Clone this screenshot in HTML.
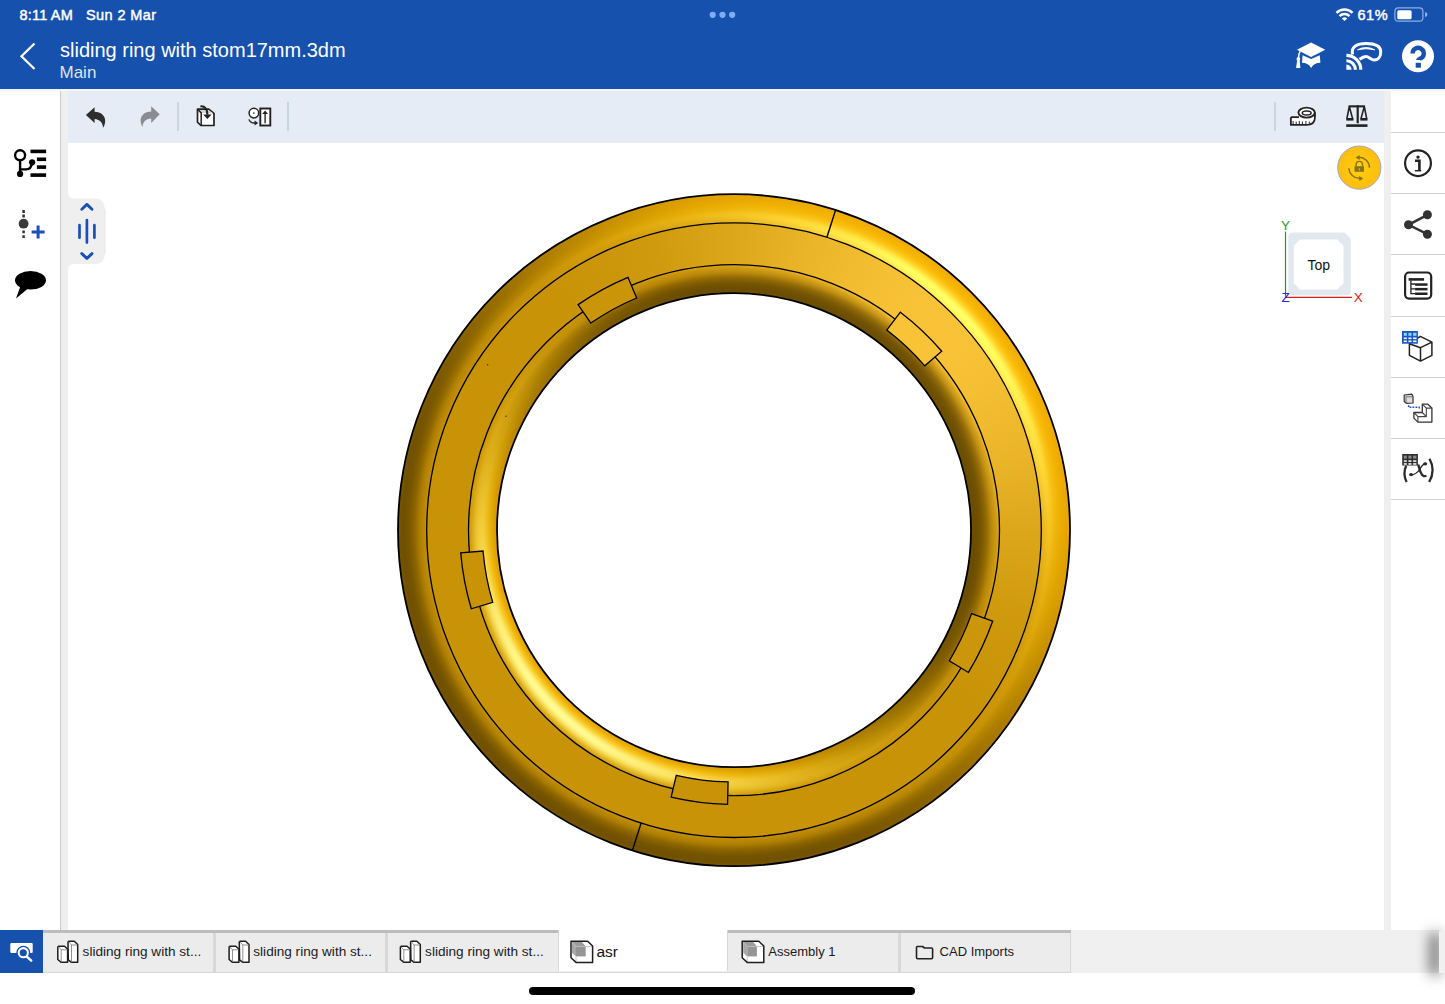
<!DOCTYPE html>
<html><head><meta charset="utf-8">
<style>
html,body{margin:0;padding:0;width:1445px;height:1004px;overflow:hidden;background:#fff;font-family:"Liberation Sans",sans-serif;}
.a{position:absolute}
.d{position:absolute;border-radius:50%}
svg{position:absolute;overflow:visible}
.tab{position:absolute;top:933px;height:38.5px;background:#ececec;font-size:13.6px;color:#1a1a1a}
.tab span{position:absolute;top:11px;white-space:nowrap}
.sep{position:absolute;left:1391px;width:54px;height:1.5px;background:#d2d2d2}
</style></head><body>
<!-- header -->
<div class="a" style="left:0;top:0;width:1445px;height:89px;background:#1651ae"></div>
<div class="a" style="left:0;top:89px;width:1445px;height:2px;background:#f4f6fa"></div>
<div class="a" style="left:19.5px;top:6.5px;color:#fff;font-size:14.5px;-webkit-text-stroke:0.45px #fff;letter-spacing:0.2px">8:11 AM</div>
<div class="a" style="left:86px;top:6.5px;color:#fff;font-size:14.5px;-webkit-text-stroke:0.45px #fff;letter-spacing:0.4px">Sun 2 Mar</div>
<div class="a" style="left:60px;top:39px;color:#fff;font-size:20px;white-space:nowrap">sliding ring with stom17mm.3dm</div>
<div class="a" style="left:59.5px;top:62.5px;color:#dde6f5;font-size:17px">Main</div>
<div class="a" style="left:1357.5px;top:6.5px;color:#fff;font-size:14.5px;-webkit-text-stroke:0.45px #fff;letter-spacing:0.5px">61%</div>
<svg width="1445" height="89" style="left:0;top:0">
  <circle cx="712.7" cy="14.8" r="3.1" fill="#80acf6"/><circle cx="722.5" cy="14.8" r="3.1" fill="#80acf6"/><circle cx="732.2" cy="14.8" r="3.1" fill="#80acf6"/>
  <polyline points="34.5,43.5 21.5,56.2 34.5,69" fill="none" stroke="#fff" stroke-width="2.3"/>
  <!-- wifi -->
  <path d="M1336.5 12.8 A11.5 11.5 0 0 1 1352.5 12.8" fill="none" stroke="#fff" stroke-width="2.5"/>
  <path d="M1339.5 16.2 A7 7 0 0 1 1349.5 16.2" fill="none" stroke="#fff" stroke-width="2.5"/>
  <path d="M1341.8 18.6 L1344.5 21 L1347.2 18.6 A3.8 3.8 0 0 0 1341.8 18.6Z" fill="#fff"/>
  <!-- battery -->
  <rect x="1394.9" y="7.9" width="28" height="13.3" rx="3.5" fill="none" stroke="#8fb0e8" stroke-width="1.2"/>
  <rect x="1397.3" y="10.2" width="14.3" height="9" rx="1.5" fill="#fff"/>
  <path d="M1425 12.2 A2.4 2.4 0 0 1 1425 17 Z" fill="#8fb0e8"/>
  <!-- grad cap -->
  <path d="M1296.9 49.8 L1311.1 42.5 L1325.3 49.8 L1311.1 57 Z" fill="#fff"/>
  <path d="M1302.6 55.2 L1311.1 58.9 L1319.8 55.2 L1320.4 62.8 Q1314.2 62.8 1311.1 67.9 Q1308 62.8 1302 62.8 Z" fill="#fff"/>
  <path d="M1300.2 51.2 Q1298.7 53.5 1298.6 57.5" fill="none" stroke="#fff" stroke-width="1.5"/>
  <circle cx="1298.4" cy="59" r="1.9" fill="#fff"/>
  <path d="M1297.2 60.3 L1299.7 60.3 L1300.4 68.1 L1296.1 68.1 Z" fill="#fff"/>
  <!-- cast/vr -->
  <path d="M1352.6 54.5 C1350.6 46.5 1357.5 43.6 1366 43.6 C1375 43.6 1380.7 46.5 1380.7 52 C1380.7 58 1377.2 60 1374.3 60 C1371.2 60 1368.8 56.4 1366 56.4 C1363.5 56.4 1361.5 57.8 1359.6 59.3" fill="none" stroke="#fff" stroke-width="3"/>
  <path d="M1357.5 49.8 Q1366 45.2 1374.8 49.8 Q1366 47.6 1357.5 49.8 Z" fill="#fff" stroke="#fff" stroke-width="0.9"/>
  <path d="M1346.4 55.4 A14.4 14.4 0 0 1 1360.8 69.8" fill="none" stroke="#fff" stroke-width="3.1"/>
  <path d="M1346.4 60.8 A9 9 0 0 1 1355.4 69.8" fill="none" stroke="#fff" stroke-width="3.1"/>
  <path d="M1346.4 64.6 A5.2 5.2 0 0 1 1351.6 69.8 L1346.4 69.8 Z" fill="#fff"/>
  <!-- help -->
  <circle cx="1418" cy="56.2" r="16" fill="#fff"/>
  <path d="M1412.6 53.5 A5.6 5.6 0 1 1 1421.4 58 Q1418.3 59.3 1418.3 60" fill="none" stroke="#1651ae" stroke-width="4.4"/>
  <rect x="1415.7" y="62.8" width="5.2" height="4.9" fill="#1651ae"/>
</svg>
<!-- left panel -->
<div class="a" style="left:60px;top:91px;width:8.3px;height:839.5px;background:#efefef;border-left:1.2px solid #c9c9c9;box-sizing:border-box"></div>
<svg width="60" height="320" style="left:0;top:0">
  <circle cx="20.1" cy="155.3" r="5" fill="none" stroke="#000" stroke-width="2.4"/>
  <path d="M20.1 160.5 V173.8" stroke="#000" stroke-width="2.4"/>
  <path d="M20.1 169.4 H26 Q31.5 169.4 32 162.5" fill="none" stroke="#000" stroke-width="2.4"/>
  <circle cx="20.1" cy="173.9" r="3.1" fill="#000"/>
  <circle cx="32.1" cy="162.3" r="3.1" fill="#000"/>
  <rect x="30.5" y="149.6" width="15.6" height="3.6" fill="#000"/>
  <rect x="36.9" y="157.5" width="9.2" height="3.6" fill="#000"/>
  <rect x="36.9" y="165.3" width="9.2" height="3.6" fill="#000"/>
  <rect x="30.5" y="173.3" width="15.6" height="3.6" fill="#000"/>
  <path d="M23.6 210.1 V213 M23.6 214.6 V217.5 M23.6 230.4 V233.3 M23.6 235.2 V238.1" stroke="#333" stroke-width="2.5"/>
  <circle cx="23.6" cy="223.7" r="4.9" fill="#3a3a3a"/>
  <path d="M31.6 232.1 H44.6 M38.1 225.6 V238.6" stroke="#1a50b8" stroke-width="3"/>
  <ellipse cx="30.5" cy="280.3" rx="15.5" ry="9.3" fill="#000"/>
  <path d="M20.5 286 L16 298.6 L28 288.5 Z" fill="#000"/>
</svg>
<!-- collapse tab -->
<svg width="60" height="100" style="left:0;top:0">
</svg>
<svg width="120" height="300" style="left:0;top:0">
  <path d="M68 191.5 Q68 198.5 74.5 198.5 L94.5 198.5 Q104.9 198.5 104.9 209 L104.9 253.5 Q104.9 264 94.5 264 L74.5 264 Q68 264 68 270.5 Z" fill="#efefef"/>
  <path d="M104.9 209 L104.9 253.5" stroke="#e2e2e2" stroke-width="0.8"/>
  <polyline points="81.8,209.2 86.9,204.4 92,209.2" fill="none" stroke="#1a4fb8" stroke-width="2.9" stroke-linecap="round" stroke-linejoin="round"/>
  <path d="M79.5 225.2 V237.7 M86.9 220.2 V242.6 M94.4 225.2 V237.7" stroke="#1a4fb8" stroke-width="2.7" stroke-linecap="round"/>
  <polyline points="81.8,253.6 86.9,258.4 92,253.6" fill="none" stroke="#1a4fb8" stroke-width="2.9" stroke-linecap="round" stroke-linejoin="round"/>
</svg>
<!-- toolbar -->
<div class="a" style="left:68.3px;top:91px;width:1315.7px;height:51.5px;background:#e6ecf6"></div>
<div class="a" style="left:176.5px;top:102px;width:2px;height:28.5px;background:#c9d5df"></div>
<div class="a" style="left:286.7px;top:102px;width:2px;height:28.5px;background:#c9d5df"></div>
<div class="a" style="left:1273.8px;top:102px;width:2px;height:29px;background:#c9d5df"></div>
<svg width="1445" height="145" style="left:0;top:0">
  <!-- undo -->
  <path d="M85.9 114.9 L94.6 107.2 L94.6 111.8 C101 111.8 105.5 116 105.2 121.5 C105 124 104.2 126 103 127.8 C103 123 100 119.3 94.6 118.9 L94.6 123 Z" fill="#2e2e2e"/>
  <!-- redo -->
  <path d="M159.7 114.3 L151.2 106.3 L151.2 111.4 C144.8 111.4 140.3 115.6 140.6 121.1 C140.8 123.6 141.6 125.4 142.5 127 C142.7 122.4 145.7 118.9 151.2 118.6 L151.2 123 Z" fill="#8a8c90"/>
  <!-- icon3 -->
  <path d="M197.5 109.2 L208.7 109.2 L214 113.4 L214 125.5 L200.9 125.5 L197.5 122.1 Z" fill="#fff" stroke="#222" stroke-width="1.7" stroke-linejoin="round"/>
  <path d="M198.3 110 L208.4 110 L213.2 113.3 L201.2 112.9 Z" fill="#d4d4d4"/>
  <path d="M197.5 109.2 L201.2 112.9 V125.5" fill="none" stroke="#222" stroke-width="1.5"/>
  <path d="M200.4 106.4 C205 105.8 207.6 109.5 207.4 114.8" fill="none" stroke="#222" stroke-width="2"/>
  <path d="M203.2 114.6 L211.6 114.6 L207.4 118.9 Z" fill="#222"/>
  <!-- icon4 -->
  <circle cx="253.9" cy="113.1" r="4.8" fill="#fff" stroke="#222" stroke-width="1.5"/>
  <circle cx="253.9" cy="113.1" r="0.8" fill="#222"/>
  <rect x="260.3" y="108.5" width="10" height="17" fill="#fff" stroke="#222" stroke-width="1.9"/>
  <path d="M265.1 123.3 V112.5" stroke="#222" stroke-width="1.4"/>
  <path d="M262.2 114 L265.1 110.4 L268 114 Z" fill="#222"/>
  <path d="M249 119.4 C249.6 122.2 252 123.2 255.4 123" fill="none" stroke="#222" stroke-width="1.3"/>
  <path d="M254.6 120.4 L258.2 123 L254.6 125.4 Z" fill="#222"/>
  <!-- tape -->
  <path d="M1290.9 117.2 H1299 M1290.9 117.2 V124.9 H1306.5 Q1314.9 124.9 1314.9 117 V112.6" fill="#fff" stroke="#222" stroke-width="1.9" stroke-linejoin="round"/>
  <path d="M1291.9 118.2 H1299 Q1301 118.5 1306.6 117.6 Q1312 117 1313.9 113 V117 Q1313.9 123.9 1306.5 123.9 H1291.9 Z" fill="#fff"/>
  <ellipse cx="1306.6" cy="112.6" rx="8.2" ry="5" fill="#fff" stroke="#222" stroke-width="1.9"/>
  <ellipse cx="1306.7" cy="112.9" rx="4.4" ry="2" fill="none" stroke="#222" stroke-width="1.5"/>
  <path d="M1293.1 121 V124 M1296.2 121.6 V124 M1299.3 121 V124 M1302.4 121.6 V124 M1305.9 121 V124 M1309.3 121.6 V124" stroke="#222" stroke-width="1"/>
  <!-- scales -->
  <rect x="1348.6" y="105.3" width="16.4" height="2.1" fill="#222"/>
  <rect x="1356.6" y="105.3" width="2.2" height="18" fill="#222"/>
  <rect x="1346.2" y="124.3" width="21.3" height="2.6" fill="#222"/>
  <path d="M1349.3 106.5 L1346.9 118.6 M1349.3 106.5 L1352.6 118.6 M1364.3 106.5 L1361 118.6 M1364.3 106.5 L1366.7 118.6" fill="none" stroke="#222" stroke-width="1.6"/>
  <rect x="1346.3" y="118" width="7.2" height="2.6" fill="#222"/>
  <rect x="1360.3" y="118" width="7.2" height="2.6" fill="#222"/>
</svg>
<!-- right panel -->
<div class="a" style="left:1384px;top:91px;width:7px;height:839.5px;background:#efefef"></div>
<div class="sep" style="top:131.6px"></div>
<div class="sep" style="top:192.6px"></div>
<div class="sep" style="top:253.5px"></div>
<div class="sep" style="top:315.8px"></div>
<div class="sep" style="top:376.8px"></div>
<div class="sep" style="top:437.8px"></div>
<div class="sep" style="top:498.8px"></div>
<svg width="1445" height="500" style="left:0;top:0">
  <circle cx="1418" cy="163.2" r="12.9" fill="none" stroke="#222" stroke-width="2.2"/>
  <circle cx="1418" cy="157.1" r="1.7" fill="#222"/>
  <path d="M1415 160.8 H1419.4 V170.6" fill="none" stroke="#222" stroke-width="2.6"/>
  <path d="M1414.9 170.7 H1421.2" fill="none" stroke="#222" stroke-width="1.5"/>
  <path d="M1427.4 214.8 L1408.5 224.8 L1427.4 234.2" fill="none" stroke="#333" stroke-width="2.5"/>
  <circle cx="1427.4" cy="214.8" r="4.5" fill="#333"/>
  <circle cx="1408.5" cy="224.8" r="4.5" fill="#333"/>
  <circle cx="1427.4" cy="234.2" r="4.5" fill="#333"/>
  <rect x="1405.1" y="272.5" width="26.1" height="26.1" rx="4" fill="none" stroke="#222" stroke-width="2.2"/>
  <rect x="1408.6" y="278.1" width="15.5" height="2.6" fill="#222"/>
  <rect x="1415.1" y="283.3" width="12.4" height="2.5" fill="#222"/>
  <rect x="1415.1" y="287.9" width="12.4" height="2.5" fill="#222"/>
  <rect x="1415.1" y="292.5" width="12.4" height="2.5" fill="#222"/>
  <path d="M1410.9 280.5 V293.6 H1415.2 M1410.9 284 H1415.2 M1410.9 288.8 H1415.2" fill="none" stroke="#222" stroke-width="1.3"/>
  <!-- cube with table -->
  <path d="M1409.4 343.7 L1420.3 336.4 L1431.9 342.1 L1431.9 355.3 L1420.5 361.1 L1409.4 355.3 Z M1409.4 343.7 L1420.5 347.7 L1431.9 342.1 M1420.5 347.7 V361.1" fill="#fff" stroke="#222" stroke-width="1.5" stroke-linejoin="round"/>
  <rect x="1402" y="331" width="15.9" height="12.7" fill="#1a56c0"/>
  <rect x="1403.8" y="332.8" width="3" height="3" fill="#8fd2f2"/><rect x="1408.4" y="332.8" width="3.1" height="3" fill="#8fd2f2"/><rect x="1413.1" y="332.8" width="3.4" height="3" fill="#8fd2f2"/>
  <rect x="1403.8" y="337.5" width="3" height="1.6" fill="#fff"/><rect x="1408.4" y="337.5" width="3.1" height="1.6" fill="#fff"/><rect x="1413.1" y="337.5" width="3.4" height="1.6" fill="#fff"/>
  <rect x="1403.8" y="340.5" width="3" height="1.6" fill="#fff"/><rect x="1408.4" y="340.5" width="3.1" height="1.6" fill="#fff"/><rect x="1413.1" y="340.5" width="3.4" height="1.6" fill="#fff"/>
  <!-- mate icon -->
  <path d="M1404.2 395 L1412 394.2 L1413 396.5 L1413 403 L1406.5 403.4 L1404.2 401.5 Z" fill="#ddd" stroke="#333" stroke-width="1.2" stroke-linejoin="round"/>
  <path d="M1406 396.8 H1412.6 M1406 396.8 V403.3" stroke="#555" stroke-width="0.8"/>
  <path d="M1408.6 405.2 V407.3 H1419.2 V409.6" fill="none" stroke="#1a50c0" stroke-width="1.4" stroke-dasharray="1.8,1.2"/>
  <path d="M1422.3 404.1 L1427.5 404.1 L1431.9 408.1 L1431.9 422.1 L1417.9 422.1 L1413.9 418.1 L1413.9 412.5 L1422.3 412.5 Z" fill="#fff" stroke="#333" stroke-width="1.3" stroke-linejoin="round"/>
  <path d="M1422.3 404.1 L1426.3 408.1 L1431.9 408.1 M1426.3 408.1 V416.6 L1422.3 412.5 M1413.9 412.5 L1417.9 416.6 L1426.3 416.6 M1417.9 416.6 V422.1" fill="none" stroke="#444" stroke-width="1.1" stroke-linejoin="round"/>
  <!-- fx -->
  <path d="M1406.2 465.8 Q1402.5 473.5 1406.6 482" fill="none" stroke="#2a2a2a" stroke-width="2.3"/>
  <path d="M1429.5 458.8 Q1436 470.5 1429.1 482" fill="none" stroke="#2a2a2a" stroke-width="2.3"/>
  <path d="M1418.3 464.5 Q1420.5 474.5 1423.5 476 Q1425.5 476.3 1426.3 475.5" fill="none" stroke="#2a2a2a" stroke-width="2.4"/>
  <path d="M1410.5 475.5 Q1417 474 1420 469 Q1423 463.5 1426 463.3" fill="none" stroke="#2a2a2a" stroke-width="1.4"/>
  <ellipse cx="1411" cy="474.5" rx="2" ry="1.6" fill="#2a2a2a"/>
  <ellipse cx="1425.2" cy="463.8" rx="2" ry="1.6" fill="#2a2a2a"/>
  <rect x="1402.2" y="454" width="15.7" height="11.5" fill="#2e2e2e"/>
  <rect x="1403.8" y="455.6" width="3" height="3" fill="#8a8a8a"/><rect x="1408.4" y="455.6" width="3.1" height="3" fill="#8a8a8a"/><rect x="1413.1" y="455.6" width="3.3" height="3" fill="#8a8a8a"/>
  <rect x="1403.8" y="460.3" width="3" height="1.5" fill="#fff"/><rect x="1408.4" y="460.3" width="3.1" height="1.5" fill="#fff"/><rect x="1413.1" y="460.3" width="3.3" height="1.5" fill="#fff"/>
  <rect x="1403.8" y="463.2" width="3" height="1.5" fill="#fff"/><rect x="1408.4" y="463.2" width="3.1" height="1.5" fill="#fff"/><rect x="1413.1" y="463.2" width="3.3" height="1.5" fill="#fff"/>
</svg>
<!-- view cube -->
<svg width="200" height="200" style="left:1270px;top:135px">
  <defs><radialGradient id="og" cx="50%" cy="50%" r="50%"><stop offset="0" stop-color="#ffdc00"/><stop offset="0.35" stop-color="#ffc80c"/><stop offset="1" stop-color="#fcbd10"/></radialGradient></defs>
  <circle cx="89.3" cy="32.6" r="21.6" fill="url(#og)" stroke="#a3a6b4" stroke-width="1"/>
  <path d="M88.6 22.3 A10.4 10.4 0 0 1 99.5 32.8" fill="none" stroke="#8a7020" stroke-width="1.4"/>
  <path d="M85.6 22.4 L89.6 19.9 L89.6 24.9 Z" fill="#8a7020"/>
  <path d="M78.9 33.3 A10.4 10.4 0 0 0 89.8 43.3" fill="none" stroke="#8a7020" stroke-width="1.4"/>
  <path d="M93.2 43.4 L89.2 40.9 L89.2 45.9 Z" fill="#8a7020"/>
  <rect x="84.5" y="31.2" width="9.5" height="5.6" fill="#8a7020"/>
  <path d="M86.1 31.3 V29.6 A3.2 3.2 0 0 1 92.5 29.6 V31.3" fill="none" stroke="#8a7020" stroke-width="1.4"/>
  <path d="M89.3 33.2 V35.6" stroke="#d9b84a" stroke-width="1"/>
  <path d="M20.2 97.5 L24 97.5 L81 97.5 L81 102 L81 106 L25 160 L20.2 160 Z" fill="none"/>
  <path d="M23.3 97.5 L74.5 97.5 L80.7 103.7 L80.7 156 Q80.7 160.2 76.5 160.2 L22.5 160.2 Q18.3 160.2 18.3 156 L18.3 102.5 Q18.3 97.5 23.3 97.5 Z" fill="#e1e8f0"/>
  <path d="M30 104.6 L67.3 104.6 L73.5 110.8 L73.5 148.2 L67.3 154.4 L30 154.4 L23.8 148.2 L23.8 110.8 Z" fill="#fff"/>
  <text x="48.8" y="134.5" font-size="14" text-anchor="middle" fill="#111">Top</text>
  <path d="M15.5 96.6 V161.8" stroke="#1c9e1c" stroke-width="1.2"/>
  <path d="M15 162.4 H82" stroke="#dd1a1a" stroke-width="1.2"/>
  <text x="15.6" y="94.8" font-size="13.5" text-anchor="middle" fill="#1c9e1c">Y</text>
  <text x="88.3" y="167" font-size="13.5" text-anchor="middle" fill="#dd1a1a">X</text>
  <text x="15.6" y="167" font-size="13.5" text-anchor="middle" fill="#1a2ae0">Z</text>
</svg>
<!-- ring -->
<div class="d" style="left:398.00px;top:194.20px;width:672.00px;height:672.00px;background:conic-gradient(#e5a401 0deg,#eaa801 7.5deg,#edaa01 15deg,#efab01 22.5deg,#f0ac02 30deg,#f0ac02 37.5deg,#f0ac02 45deg,#f0ac02 52.5deg,#f0ac02 60deg,#efab01 67.5deg,#edaa01 75deg,#eaa801 82.5deg,#e5a401 90deg,#dd9e01 97.5deg,#d39700 105deg,#c78e00 112.5deg,#b98500 120deg,#ab7a00 127.5deg,#9d7000 135deg,#906700 142.5deg,#855f00 150deg,#7d5a00 157.5deg,#785600 165deg,#775500 172.5deg,#775500 180deg,#775500 187.5deg,#775500 195deg,#775500 202.5deg,#775500 210deg,#775500 217.5deg,#775500 225deg,#775500 232.5deg,#775500 240deg,#775500 247.5deg,#775500 255deg,#775500 262.5deg,#775500 270deg,#775500 277.5deg,#785600 285deg,#7d5a00 292.5deg,#855f00 300deg,#906700 307.5deg,#9d7000 315deg,#ab7a00 322.5deg,#b98500 330deg,#c78e00 337.5deg,#d39700 345deg,#dd9e01 352.5deg,#e5a401 360deg)"></div>
<div class="d" style="left:398.99px;top:195.19px;width:670.02px;height:670.02px;background:conic-gradient(#e5a401 0deg,#eaa801 7.5deg,#eeab01 15deg,#f0ac02 22.5deg,#f1ad02 30deg,#f1ad02 37.5deg,#f1ad02 45deg,#f1ad02 52.5deg,#f1ad02 60deg,#f0ac02 67.5deg,#eeab01 75deg,#eaa801 82.5deg,#e5a401 90deg,#dd9f01 97.5deg,#d39700 105deg,#c78e00 112.5deg,#b98400 120deg,#aa7a00 127.5deg,#9c7000 135deg,#8f6600 142.5deg,#835e00 150deg,#7b5800 157.5deg,#775500 165deg,#755400 172.5deg,#755400 180deg,#755400 187.5deg,#755400 195deg,#755400 202.5deg,#755400 210deg,#755400 217.5deg,#755400 225deg,#755400 232.5deg,#755400 240deg,#755400 247.5deg,#755400 255deg,#755400 262.5deg,#755400 270deg,#755400 277.5deg,#775500 285deg,#7b5800 292.5deg,#835e00 300deg,#8f6600 307.5deg,#9c7000 315deg,#aa7a00 322.5deg,#b98400 330deg,#c78e00 337.5deg,#d39700 345deg,#dd9f01 352.5deg,#e5a401 360deg)"></div>
<div class="d" style="left:399.98px;top:196.18px;width:668.04px;height:668.04px;background:conic-gradient(#e6a501 0deg,#eba901 7.5deg,#efac02 15deg,#f1ad02 22.5deg,#f1ae02 30deg,#f2ae02 37.5deg,#f2ae02 45deg,#f2ae02 52.5deg,#f1ae02 60deg,#f1ad02 67.5deg,#efac02 75deg,#eba901 82.5deg,#e6a501 90deg,#de9f01 97.5deg,#d39800 105deg,#c78f00 112.5deg,#b88400 120deg,#a97a00 127.5deg,#9b6f00 135deg,#8d6500 142.5deg,#825d00 150deg,#7a5700 157.5deg,#755400 165deg,#735300 172.5deg,#735300 180deg,#735300 187.5deg,#735300 195deg,#735300 202.5deg,#735300 210deg,#735300 217.5deg,#735300 225deg,#735300 232.5deg,#735300 240deg,#735300 247.5deg,#735300 255deg,#735300 262.5deg,#735300 270deg,#735300 277.5deg,#755400 285deg,#7a5700 292.5deg,#825d00 300deg,#8d6500 307.5deg,#9b6f00 315deg,#a97a00 322.5deg,#b88400 330deg,#c78f00 337.5deg,#d39800 345deg,#de9f01 352.5deg,#e6a501 360deg)"></div>
<div class="d" style="left:400.97px;top:197.17px;width:666.06px;height:666.06px;background:conic-gradient(#e6a601 0deg,#ecaa01 7.5deg,#efad02 15deg,#f1af02 22.5deg,#f2af02 30deg,#f3b003 37.5deg,#f3b003 45deg,#f3b003 52.5deg,#f2af02 60deg,#f1af02 67.5deg,#efad02 75deg,#ecaa01 82.5deg,#e6a601 90deg,#dea001 97.5deg,#d39800 105deg,#c68f00 112.5deg,#b88400 120deg,#a97900 127.5deg,#9a6e00 135deg,#8c6400 142.5deg,#805c00 150deg,#785600 157.5deg,#735200 165deg,#725100 172.5deg,#725100 180deg,#725100 187.5deg,#725100 195deg,#725100 202.5deg,#725100 210deg,#725100 217.5deg,#725100 225deg,#725100 232.5deg,#725100 240deg,#725100 247.5deg,#725100 255deg,#725100 262.5deg,#725100 270deg,#725100 277.5deg,#735200 285deg,#785600 292.5deg,#805c00 300deg,#8c6400 307.5deg,#9a6e00 315deg,#a97900 322.5deg,#b88400 330deg,#c68f00 337.5deg,#d39800 345deg,#dea001 352.5deg,#e6a601 360deg)"></div>
<div class="d" style="left:401.96px;top:198.16px;width:664.08px;height:664.08px;background:conic-gradient(#e7a701 0deg,#ecab02 7.5deg,#f0ae02 15deg,#f2b002 22.5deg,#f3b103 30deg,#f4b103 37.5deg,#f4b103 45deg,#f4b103 52.5deg,#f3b103 60deg,#f2b002 67.5deg,#f0ae02 75deg,#ecab02 82.5deg,#e7a701 90deg,#dea101 97.5deg,#d39901 105deg,#c68f00 112.5deg,#b88400 120deg,#a87900 127.5deg,#996e00 135deg,#8b6400 142.5deg,#7f5b00 150deg,#775500 157.5deg,#725100 165deg,#705000 172.5deg,#705000 180deg,#705000 187.5deg,#705000 195deg,#705000 202.5deg,#705000 210deg,#705000 217.5deg,#705000 225deg,#705000 232.5deg,#705000 240deg,#705000 247.5deg,#705000 255deg,#705000 262.5deg,#705000 270deg,#705000 277.5deg,#725100 285deg,#775500 292.5deg,#7f5b00 300deg,#8b6400 307.5deg,#996e00 315deg,#a87900 322.5deg,#b88400 330deg,#c68f00 337.5deg,#d39901 345deg,#dea101 352.5deg,#e7a701 360deg)"></div>
<div class="d" style="left:402.95px;top:199.15px;width:662.10px;height:662.10px;background:conic-gradient(#e7a801 0deg,#edac02 7.5deg,#f1af02 15deg,#f3b103 22.5deg,#f4b203 30deg,#f5b203 37.5deg,#f5b204 45deg,#f5b203 52.5deg,#f4b203 60deg,#f3b103 67.5deg,#f1af02 75deg,#edac02 82.5deg,#e7a801 90deg,#dfa201 97.5deg,#d49a01 105deg,#c79000 112.5deg,#b88500 120deg,#a97a00 127.5deg,#9a6f00 135deg,#8c6400 142.5deg,#805c00 150deg,#785600 157.5deg,#735200 165deg,#715100 172.5deg,#715100 180deg,#715100 187.5deg,#715100 195deg,#715100 202.5deg,#715100 210deg,#715100 217.5deg,#715100 225deg,#715100 232.5deg,#715100 240deg,#715100 247.5deg,#715100 255deg,#715100 262.5deg,#715100 270deg,#715100 277.5deg,#735200 285deg,#785600 292.5deg,#805c00 300deg,#8c6400 307.5deg,#9a6f00 315deg,#a97a00 322.5deg,#b88500 330deg,#c79000 337.5deg,#d49a01 345deg,#dfa201 352.5deg,#e7a801 360deg)"></div>
<div class="d" style="left:403.94px;top:200.14px;width:660.12px;height:660.12px;background:conic-gradient(#e8a902 0deg,#eeae02 7.5deg,#f2b103 15deg,#f4b203 22.5deg,#f5b304 30deg,#f6b404 37.5deg,#f6b404 45deg,#f6b404 52.5deg,#f5b304 60deg,#f4b203 67.5deg,#f2b103 75deg,#eeae02 82.5deg,#e8a902 90deg,#e0a301 97.5deg,#d59b01 105deg,#c89100 112.5deg,#b98600 120deg,#aa7b00 127.5deg,#9b7000 135deg,#8d6500 142.5deg,#815d00 150deg,#795700 157.5deg,#745300 165deg,#725200 172.5deg,#725200 180deg,#725200 187.5deg,#725200 195deg,#725200 202.5deg,#725200 210deg,#725200 217.5deg,#725200 225deg,#725200 232.5deg,#725200 240deg,#725200 247.5deg,#725200 255deg,#725200 262.5deg,#725200 270deg,#725200 277.5deg,#745300 285deg,#795700 292.5deg,#815d00 300deg,#8d6500 307.5deg,#9b7000 315deg,#aa7b00 322.5deg,#b98600 330deg,#c89100 337.5deg,#d59b01 345deg,#e0a301 352.5deg,#e8a902 360deg)"></div>
<div class="d" style="left:404.93px;top:201.13px;width:658.14px;height:658.14px;background:conic-gradient(#e9aa02 0deg,#efaf03 7.5deg,#f3b203 15deg,#f5b404 22.5deg,#f6b505 30deg,#f7b505 37.5deg,#f7b505 45deg,#f7b505 52.5deg,#f6b505 60deg,#f5b404 67.5deg,#f3b203 75deg,#efaf03 82.5deg,#e9aa02 90deg,#e1a401 97.5deg,#d69b01 105deg,#c99200 112.5deg,#ba8700 120deg,#ab7c00 127.5deg,#9c7000 135deg,#8e6600 142.5deg,#825e00 150deg,#7a5700 157.5deg,#755400 165deg,#735300 172.5deg,#735300 180deg,#735300 187.5deg,#735300 195deg,#735300 202.5deg,#735300 210deg,#735300 217.5deg,#735300 225deg,#735300 232.5deg,#735300 240deg,#735300 247.5deg,#735300 255deg,#735300 262.5deg,#735300 270deg,#735300 277.5deg,#755400 285deg,#7a5700 292.5deg,#825e00 300deg,#8e6600 307.5deg,#9c7000 315deg,#ab7c00 322.5deg,#ba8700 330deg,#c99200 337.5deg,#d69b01 345deg,#e1a401 352.5deg,#e9aa02 360deg)"></div>
<div class="d" style="left:405.92px;top:202.12px;width:656.17px;height:656.17px;background:conic-gradient(#eaab02 0deg,#f0b003 7.5deg,#f4b404 15deg,#f6b605 22.5deg,#f7b706 30deg,#f8b707 37.5deg,#f8b807 45deg,#f8b707 52.5deg,#f7b706 60deg,#f6b605 67.5deg,#f4b404 75deg,#f0b003 82.5deg,#eaab02 90deg,#e1a502 97.5deg,#d79c01 105deg,#c99300 112.5deg,#bb8800 120deg,#ab7c00 127.5deg,#9c7100 135deg,#8f6700 142.5deg,#835f00 150deg,#7b5800 157.5deg,#765500 165deg,#745400 172.5deg,#745400 180deg,#745400 187.5deg,#745400 195deg,#745400 202.5deg,#745400 210deg,#745400 217.5deg,#745400 225deg,#745400 232.5deg,#745400 240deg,#745400 247.5deg,#745400 255deg,#745400 262.5deg,#745400 270deg,#745400 277.5deg,#765500 285deg,#7b5800 292.5deg,#835f00 300deg,#8f6700 307.5deg,#9c7100 315deg,#ab7c00 322.5deg,#bb8800 330deg,#c99300 337.5deg,#d79c01 345deg,#e1a502 352.5deg,#eaab02 360deg)"></div>
<div class="d" style="left:406.91px;top:203.11px;width:654.19px;height:654.19px;background:conic-gradient(#ebad03 0deg,#f1b204 7.5deg,#f5b505 15deg,#f7b807 22.5deg,#f9b908 30deg,#f9ba09 37.5deg,#f9ba09 45deg,#f9ba09 52.5deg,#f9b908 60deg,#f7b807 67.5deg,#f5b505 75deg,#f1b204 82.5deg,#ebad03 90deg,#e2a602 97.5deg,#d79e01 105deg,#ca9401 112.5deg,#bc8900 120deg,#ac7d00 127.5deg,#9d7200 135deg,#906800 142.5deg,#845f00 150deg,#7c5900 157.5deg,#775500 165deg,#755400 172.5deg,#755400 180deg,#755400 187.5deg,#755400 195deg,#755400 202.5deg,#755400 210deg,#755400 217.5deg,#755400 225deg,#755400 232.5deg,#755400 240deg,#755400 247.5deg,#755400 255deg,#755400 262.5deg,#755400 270deg,#755400 277.5deg,#775500 285deg,#7c5900 292.5deg,#845f00 300deg,#906800 307.5deg,#9d7200 315deg,#ac7d00 322.5deg,#bc8900 330deg,#ca9401 337.5deg,#d79e01 345deg,#e2a602 352.5deg,#ebad03 360deg)"></div>
<div class="d" style="left:407.90px;top:204.10px;width:652.21px;height:652.21px;background:conic-gradient(#ecae04 0deg,#f2b405 7.5deg,#f6b807 15deg,#f9ba09 22.5deg,#fabc0a 30deg,#fbbd0b 37.5deg,#fbbd0c 45deg,#fbbd0b 52.5deg,#fabc0a 60deg,#f9ba09 67.5deg,#f6b807 75deg,#f2b405 82.5deg,#ecae04 90deg,#e3a702 97.5deg,#d89f01 105deg,#cb9501 112.5deg,#bd8a00 120deg,#ae7e00 127.5deg,#9f7300 135deg,#916900 142.5deg,#866100 150deg,#7e5b00 157.5deg,#795700 165deg,#775600 172.5deg,#775600 180deg,#775600 187.5deg,#775600 195deg,#775600 202.5deg,#775600 210deg,#775600 217.5deg,#775600 225deg,#775600 232.5deg,#775600 240deg,#775600 247.5deg,#775600 255deg,#775600 262.5deg,#775600 270deg,#775600 277.5deg,#795700 285deg,#7e5b00 292.5deg,#866100 300deg,#916900 307.5deg,#9f7300 315deg,#ae7e00 322.5deg,#bd8a00 330deg,#cb9501 337.5deg,#d89f01 345deg,#e3a702 352.5deg,#ecae04 360deg)"></div>
<div class="d" style="left:408.89px;top:205.09px;width:650.23px;height:650.23px;background:conic-gradient(#edb005 0deg,#f4b607 7.5deg,#f8ba09 15deg,#fabd0c 22.5deg,#fcbf0e 30deg,#fcc10f 37.5deg,#fcc110 45deg,#fcc10f 52.5deg,#fcbf0e 60deg,#fabd0c 67.5deg,#f8ba09 75deg,#f4b607 82.5deg,#edb005 90deg,#e5a903 97.5deg,#daa002 105deg,#cd9601 112.5deg,#bf8b00 120deg,#b08000 127.5deg,#a27500 135deg,#946b00 142.5deg,#896300 150deg,#815d00 157.5deg,#7c5a00 165deg,#7b5800 172.5deg,#7b5800 180deg,#7b5800 187.5deg,#7b5800 195deg,#7b5800 202.5deg,#7b5800 210deg,#7b5800 217.5deg,#7b5800 225deg,#7b5800 232.5deg,#7b5800 240deg,#7b5800 247.5deg,#7b5800 255deg,#7b5800 262.5deg,#7b5800 270deg,#7b5800 277.5deg,#7c5a00 285deg,#815d00 292.5deg,#896300 300deg,#946b00 307.5deg,#a27500 315deg,#b08000 322.5deg,#bf8b00 330deg,#cd9601 337.5deg,#daa002 345deg,#e5a903 352.5deg,#edb005 360deg)"></div>
<div class="d" style="left:409.88px;top:206.08px;width:648.25px;height:648.25px;background:conic-gradient(#eeb207 0deg,#f4b80a 7.5deg,#f8bd0d 15deg,#fbc010 22.5deg,#fcc313 30deg,#fdc515 37.5deg,#fdc516 45deg,#fdc515 52.5deg,#fcc313 60deg,#fbc010 67.5deg,#f8bd0d 75deg,#f4b80a 82.5deg,#eeb207 90deg,#e5aa04 97.5deg,#dba103 105deg,#ce9702 112.5deg,#c08d01 120deg,#b28200 127.5deg,#a47700 135deg,#976e00 142.5deg,#8d6500 150deg,#856000 157.5deg,#805c00 165deg,#7f5b00 172.5deg,#7f5b00 180deg,#7f5b00 187.5deg,#7f5b00 195deg,#7f5b00 202.5deg,#7f5b00 210deg,#7f5b00 217.5deg,#7f5b00 225deg,#7f5b00 232.5deg,#7f5b00 240deg,#7f5b00 247.5deg,#7f5b00 255deg,#7f5b00 262.5deg,#7f5b00 270deg,#7f5b00 277.5deg,#805c00 285deg,#856000 292.5deg,#8d6500 300deg,#976e00 307.5deg,#a47700 315deg,#b28200 322.5deg,#c08d01 330deg,#ce9702 337.5deg,#dba103 345deg,#e5aa04 352.5deg,#eeb207 360deg)"></div>
<div class="d" style="left:410.87px;top:207.07px;width:646.27px;height:646.27px;background:conic-gradient(#eeb309 0deg,#f5ba0d 7.5deg,#f9c012 15deg,#fcc416 22.5deg,#fdc81a 30deg,#feca1d 37.5deg,#ffcb1e 45deg,#feca1d 52.5deg,#fdc81a 60deg,#fcc416 67.5deg,#f9c012 75deg,#f5ba0d 82.5deg,#eeb309 90deg,#e6ab06 97.5deg,#dba204 105deg,#cf9802 112.5deg,#c28e02 120deg,#b48301 127.5deg,#a77901 135deg,#9a7000 142.5deg,#906800 150deg,#886200 157.5deg,#845f00 165deg,#835e00 172.5deg,#835e00 180deg,#835e00 187.5deg,#835e00 195deg,#835e00 202.5deg,#835e00 210deg,#835e00 217.5deg,#835e00 225deg,#835e00 232.5deg,#835e00 240deg,#835e00 247.5deg,#835e00 255deg,#835e00 262.5deg,#835e00 270deg,#835e00 277.5deg,#845f00 285deg,#886200 292.5deg,#906800 300deg,#9a7000 307.5deg,#a77901 315deg,#b48301 322.5deg,#c28e02 330deg,#cf9802 337.5deg,#dba204 345deg,#e6ab06 352.5deg,#eeb309 360deg)"></div>
<div class="d" style="left:411.86px;top:208.06px;width:644.29px;height:644.29px;background:conic-gradient(#efb50c 0deg,#f5bd12 7.5deg,#fac317 15deg,#fdc91d 22.5deg,#ffcd22 30deg,#ffd025 37.5deg,#ffd127 45deg,#ffd025 52.5deg,#ffcd22 60deg,#fdc91d 67.5deg,#fac317 75deg,#f5bd12 82.5deg,#efb50c 90deg,#e7ad08 97.5deg,#dca305 105deg,#d09903 112.5deg,#c38f02 120deg,#b68502 127.5deg,#a97b01 135deg,#9d7201 142.5deg,#936a00 150deg,#8c6400 157.5deg,#886100 165deg,#876000 172.5deg,#876000 180deg,#876000 187.5deg,#876000 195deg,#876000 202.5deg,#876000 210deg,#876000 217.5deg,#876000 225deg,#876000 232.5deg,#876000 240deg,#876000 247.5deg,#876000 255deg,#876000 262.5deg,#876000 270deg,#876000 277.5deg,#886100 285deg,#8c6400 292.5deg,#936a00 300deg,#9d7201 307.5deg,#a97b01 315deg,#b68502 322.5deg,#c38f02 330deg,#d09903 337.5deg,#dca305 345deg,#e7ad08 352.5deg,#efb50c 360deg)"></div>
<div class="d" style="left:412.84px;top:209.04px;width:642.31px;height:642.31px;background:conic-gradient(#f0b710 0deg,#f6c016 7.5deg,#fbc81d 15deg,#fece25 22.5deg,#ffd42b 30deg,#ffd72f 37.5deg,#ffd831 45deg,#ffd72f 52.5deg,#ffd42b 60deg,#fece25 67.5deg,#fbc81d 75deg,#f6c016 82.5deg,#f0b710 90deg,#e7ae0a 97.5deg,#dda407 105deg,#d19a04 112.5deg,#c59003 120deg,#b88602 127.5deg,#ab7d01 135deg,#a07401 142.5deg,#976c01 150deg,#906700 157.5deg,#8b6400 165deg,#8a6300 172.5deg,#8a6300 180deg,#8a6300 187.5deg,#8a6300 195deg,#8a6300 202.5deg,#8a6300 210deg,#8a6300 217.5deg,#8a6300 225deg,#8a6300 232.5deg,#8a6300 240deg,#8a6300 247.5deg,#8a6300 255deg,#8a6300 262.5deg,#8a6300 270deg,#8a6300 277.5deg,#8b6400 285deg,#906700 292.5deg,#976c01 300deg,#a07401 307.5deg,#ab7d01 315deg,#b88602 322.5deg,#c59003 330deg,#d19a04 337.5deg,#dda407 345deg,#e7ae0a 352.5deg,#f0b710 360deg)"></div>
<div class="d" style="left:413.83px;top:210.03px;width:640.33px;height:640.33px;background:conic-gradient(#f1ba13 0deg,#f7c31b 7.5deg,#fccc24 15deg,#ffd42d 22.5deg,#ffdb35 30deg,#ffdf3a 37.5deg,#ffe13c 45deg,#ffdf3a 52.5deg,#ffdb35 60deg,#ffd42d 67.5deg,#fccc24 75deg,#f7c31b 82.5deg,#f1ba13 90deg,#e8b00d 97.5deg,#dea608 105deg,#d39c05 112.5deg,#c79204 120deg,#ba8803 127.5deg,#af7f02 135deg,#a47701 142.5deg,#9b7001 150deg,#946a01 157.5deg,#906700 165deg,#8f6700 172.5deg,#8f6700 180deg,#8f6700 187.5deg,#8f6700 195deg,#8f6700 202.5deg,#8f6700 210deg,#8f6700 217.5deg,#8f6700 225deg,#8f6700 232.5deg,#8f6700 240deg,#8f6700 247.5deg,#8f6700 255deg,#8f6700 262.5deg,#8f6700 270deg,#8f6700 277.5deg,#906700 285deg,#946a01 292.5deg,#9b7001 300deg,#a47701 307.5deg,#af7f02 315deg,#ba8803 322.5deg,#c79204 330deg,#d39c05 337.5deg,#dea608 345deg,#e8b00d 352.5deg,#f1ba13 360deg)"></div>
<div class="d" style="left:414.82px;top:211.02px;width:638.35px;height:638.35px;background:conic-gradient(#f2bc16 0deg,#f9c720 7.5deg,#fed12a 15deg,#ffdb35 22.5deg,#ffe23e 30deg,#ffe845 37.5deg,#ffe947 45deg,#ffe845 52.5deg,#ffe23e 60deg,#ffdb35 67.5deg,#fed12a 75deg,#f9c720 82.5deg,#f2bc16 90deg,#e9b20f 97.5deg,#dfa80a 105deg,#d59e07 112.5deg,#c99405 120deg,#be8b03 127.5deg,#b38203 135deg,#a97a02 142.5deg,#a07402 150deg,#9a6f01 157.5deg,#966c01 165deg,#956b01 172.5deg,#956b01 180deg,#956b01 187.5deg,#956b01 195deg,#956b01 202.5deg,#956b01 210deg,#956b01 217.5deg,#956b01 225deg,#956b01 232.5deg,#956b01 240deg,#956b01 247.5deg,#956b01 255deg,#956b01 262.5deg,#956b01 270deg,#956b01 277.5deg,#966c01 285deg,#9a6f01 292.5deg,#a07402 300deg,#a97a02 307.5deg,#b38203 315deg,#be8b03 322.5deg,#c99405 330deg,#d59e07 337.5deg,#dfa80a 345deg,#e9b20f 352.5deg,#f2bc16 360deg)"></div>
<div class="d" style="left:415.81px;top:212.01px;width:636.37px;height:636.37px;background:conic-gradient(#f3bf1a 0deg,#faca25 7.5deg,#ffd631 15deg,#ffe13d 22.5deg,#ffea47 30deg,#fff04f 37.5deg,#fff251 45deg,#fff04f 52.5deg,#ffea47 60deg,#ffe13d 67.5deg,#ffd631 75deg,#faca25 82.5deg,#f3bf1a 90deg,#ebb411 97.5deg,#e1a90c 105deg,#d6a008 112.5deg,#cc9606 120deg,#c18e04 127.5deg,#b68503 135deg,#ad7e03 142.5deg,#a57802 150deg,#a07302 157.5deg,#9c7101 165deg,#9b7001 172.5deg,#9b7001 180deg,#9b7001 187.5deg,#9b7001 195deg,#9b7001 202.5deg,#9b7001 210deg,#9b7001 217.5deg,#9b7001 225deg,#9b7001 232.5deg,#9b7001 240deg,#9b7001 247.5deg,#9b7001 255deg,#9b7001 262.5deg,#9b7001 270deg,#9b7001 277.5deg,#9c7101 285deg,#a07302 292.5deg,#a57802 300deg,#ad7e03 307.5deg,#b68503 315deg,#c18e04 322.5deg,#cc9606 330deg,#d6a008 337.5deg,#e1a90c 345deg,#ebb411 352.5deg,#f3bf1a 360deg)"></div>
<div class="d" style="left:416.80px;top:213.00px;width:634.39px;height:634.39px;background:conic-gradient(#f4c11d 0deg,#fbce29 7.5deg,#ffda36 15deg,#ffe644 22.5deg,#fff04f 30deg,#fff757 37.5deg,#fff95a 45deg,#fff757 52.5deg,#fff04f 60deg,#ffe644 67.5deg,#ffda36 75deg,#fbce29 82.5deg,#f4c11d 90deg,#ecb614 97.5deg,#e2ab0d 105deg,#d8a109 112.5deg,#ce9807 120deg,#c49005 127.5deg,#ba8904 135deg,#b28203 142.5deg,#ab7c03 150deg,#a57802 157.5deg,#a27502 165deg,#a17502 172.5deg,#a17502 180deg,#a17502 187.5deg,#a17502 195deg,#a17502 202.5deg,#a17502 210deg,#a17502 217.5deg,#a17502 225deg,#a17502 232.5deg,#a17502 240deg,#a17502 247.5deg,#a17502 255deg,#a17502 262.5deg,#a17502 270deg,#a17502 277.5deg,#a27502 285deg,#a57802 292.5deg,#ab7c03 300deg,#b28203 307.5deg,#ba8904 315deg,#c49005 322.5deg,#ce9807 330deg,#d8a109 337.5deg,#e2ab0d 345deg,#ecb614 352.5deg,#f4c11d 360deg)"></div>
<div class="d" style="left:417.79px;top:213.99px;width:632.41px;height:632.41px;background:conic-gradient(#f5c320 0deg,#fcd02c 7.5deg,#ffde3b 15deg,#ffea49 22.5deg,#fff556 30deg,#fffc5e 37.5deg,#ffff61 45deg,#fffc5e 52.5deg,#fff556 60deg,#ffea49 67.5deg,#ffde3b 75deg,#fcd02c 82.5deg,#f5c320 90deg,#ecb716 97.5deg,#e3ac0f 105deg,#daa30a 112.5deg,#d09a07 120deg,#c79306 127.5deg,#be8c05 135deg,#b68504 142.5deg,#b08003 150deg,#ab7c03 157.5deg,#a87a02 165deg,#a77902 172.5deg,#a77902 180deg,#a77902 187.5deg,#a77902 195deg,#a77902 202.5deg,#a77902 210deg,#a77902 217.5deg,#a77902 225deg,#a77902 232.5deg,#a77902 240deg,#a77902 247.5deg,#a77902 255deg,#a77902 262.5deg,#a77902 270deg,#a77902 277.5deg,#a87a02 285deg,#ab7c03 292.5deg,#b08003 300deg,#b68504 307.5deg,#be8c05 315deg,#c79306 322.5deg,#d09a07 330deg,#daa30a 337.5deg,#e3ac0f 345deg,#ecb716 352.5deg,#f5c320 360deg)"></div>
<div class="d" style="left:418.78px;top:214.98px;width:630.43px;height:630.43px;background:conic-gradient(#f3c221 0deg,#fbd02e 7.5deg,#ffde3d 15deg,#ffec4c 22.5deg,#fff859 30deg,#ffff62 37.5deg,#ffff65 45deg,#ffff62 52.5deg,#fff859 60deg,#ffec4c 67.5deg,#ffde3d 75deg,#fbd02e 82.5deg,#f3c221 90deg,#ebb616 97.5deg,#e2ab0f 105deg,#d9a20a 112.5deg,#d19b08 120deg,#c89406 127.5deg,#c18e05 135deg,#ba8804 142.5deg,#b58404 150deg,#b18003 157.5deg,#ae7e03 165deg,#ad7e03 172.5deg,#ad7e03 180deg,#ad7e03 187.5deg,#ad7e03 195deg,#ad7e03 202.5deg,#ad7e03 210deg,#ad7e03 217.5deg,#ad7e03 225deg,#ad7e03 232.5deg,#ad7e03 240deg,#ad7e03 247.5deg,#ad7e03 255deg,#ad7e03 262.5deg,#ad7e03 270deg,#ad7e03 277.5deg,#ae7e03 285deg,#b18003 292.5deg,#b58404 300deg,#ba8804 307.5deg,#c18e05 315deg,#c89406 322.5deg,#d19b08 330deg,#d9a20a 337.5deg,#e2ab0f 345deg,#ebb616 352.5deg,#f3c221 360deg)"></div>
<div class="d" style="left:419.77px;top:215.97px;width:628.46px;height:628.46px;background:conic-gradient(#f2c122 0deg,#facf2f 7.5deg,#ffde3e 15deg,#ffed4e 22.5deg,#fff95b 30deg,#ffff64 37.5deg,#ffff67 45deg,#ffff64 52.5deg,#fff95b 60deg,#ffed4e 67.5deg,#ffde3e 75deg,#facf2f 82.5deg,#f2c122 90deg,#e9b417 97.5deg,#e0aa0f 105deg,#d8a10a 112.5deg,#d09a08 120deg,#c99406 127.5deg,#c28f05 135deg,#bd8a05 142.5deg,#b88604 150deg,#b48304 157.5deg,#b28103 165deg,#b18103 172.5deg,#b18103 180deg,#b18103 187.5deg,#b18103 195deg,#b18103 202.5deg,#b18103 210deg,#b18103 217.5deg,#b18103 225deg,#b18103 232.5deg,#b18103 240deg,#b18103 247.5deg,#b18103 255deg,#b18103 262.5deg,#b18103 270deg,#b18103 277.5deg,#b28103 285deg,#b48304 292.5deg,#b88604 300deg,#bd8a05 307.5deg,#c28f05 315deg,#c99406 322.5deg,#d09a08 330deg,#d8a10a 337.5deg,#e0aa0f 345deg,#e9b417 352.5deg,#f2c122 360deg)"></div>
<div class="d" style="left:420.76px;top:216.96px;width:626.48px;height:626.48px;background:conic-gradient(#f0bf22 0deg,#f9ce2f 7.5deg,#ffdd3e 15deg,#ffec4d 22.5deg,#fff85a 30deg,#ffff63 37.5deg,#ffff66 45deg,#ffff63 52.5deg,#fff85a 60deg,#ffec4d 67.5deg,#ffdd3e 75deg,#f9ce2f 82.5deg,#f0bf22 90deg,#e7b317 97.5deg,#dea910 105deg,#d7a00b 112.5deg,#cf9a08 120deg,#c99406 127.5deg,#c38f05 135deg,#be8b05 142.5deg,#ba8804 150deg,#b78504 157.5deg,#b58404 165deg,#b58304 172.5deg,#b58304 180deg,#b58304 187.5deg,#b58304 195deg,#b58304 202.5deg,#b58304 210deg,#b58304 217.5deg,#b58304 225deg,#b58304 232.5deg,#b58304 240deg,#b58304 247.5deg,#b58304 255deg,#b58304 262.5deg,#b58304 270deg,#b58304 277.5deg,#b58404 285deg,#b78504 292.5deg,#ba8804 300deg,#be8b05 307.5deg,#c38f05 315deg,#c99406 322.5deg,#cf9a08 330deg,#d7a00b 337.5deg,#dea910 345deg,#e7b317 352.5deg,#f0bf22 360deg)"></div>
<div class="d" style="left:421.75px;top:217.95px;width:624.50px;height:624.50px;background:conic-gradient(#eebd22 0deg,#f7cb2f 7.5deg,#ffda3d 15deg,#ffe94c 22.5deg,#fff558 30deg,#fffe60 37.5deg,#ffff63 45deg,#fffe60 52.5deg,#fff558 60deg,#ffe94c 67.5deg,#ffda3d 75deg,#f7cb2f 82.5deg,#eebd22 90deg,#e5b117 97.5deg,#dda710 105deg,#d59f0b 112.5deg,#cf9908 120deg,#c99406 127.5deg,#c49006 135deg,#c08d05 142.5deg,#bc8a05 150deg,#ba8704 157.5deg,#b88604 165deg,#b88604 172.5deg,#b88604 180deg,#b88604 187.5deg,#b88604 195deg,#b88604 202.5deg,#b88604 210deg,#b88604 217.5deg,#b88604 225deg,#b88604 232.5deg,#b88604 240deg,#b88604 247.5deg,#b88604 255deg,#b88604 262.5deg,#b88604 270deg,#b88604 277.5deg,#b88604 285deg,#ba8704 292.5deg,#bc8a05 300deg,#c08d05 307.5deg,#c49006 315deg,#c99406 322.5deg,#cf9908 330deg,#d59f0b 337.5deg,#dda710 345deg,#e5b117 352.5deg,#eebd22 360deg)"></div>
<div class="d" style="left:422.74px;top:218.94px;width:622.52px;height:622.52px;background:conic-gradient(#ecbb21 0deg,#f5c82e 7.5deg,#fed73c 15deg,#ffe549 22.5deg,#fff155 30deg,#fff95c 37.5deg,#fffb5f 45deg,#fff95c 52.5deg,#fff155 60deg,#ffe549 67.5deg,#fed73c 75deg,#f5c82e 82.5deg,#ecbb21 90deg,#e3af17 97.5deg,#dba510 105deg,#d49e0b 112.5deg,#ce9908 120deg,#c99407 127.5deg,#c59106 135deg,#c28e05 142.5deg,#bf8b05 150deg,#bd8a05 157.5deg,#bb8905 165deg,#bb8805 172.5deg,#bb8805 180deg,#bb8805 187.5deg,#bb8805 195deg,#bb8805 202.5deg,#bb8805 210deg,#bb8805 217.5deg,#bb8805 225deg,#bb8805 232.5deg,#bb8805 240deg,#bb8805 247.5deg,#bb8805 255deg,#bb8805 262.5deg,#bb8805 270deg,#bb8805 277.5deg,#bb8905 285deg,#bd8a05 292.5deg,#bf8b05 300deg,#c28e05 307.5deg,#c59106 315deg,#c99407 322.5deg,#ce9908 330deg,#d49e0b 337.5deg,#dba510 345deg,#e3af17 352.5deg,#ecbb21 360deg)"></div>
<div class="d" style="left:423.73px;top:219.93px;width:620.54px;height:620.54px;background:conic-gradient(#e9b821 0deg,#f3c52d 7.5deg,#fcd23a 15deg,#ffe046 22.5deg,#ffeb51 30deg,#fff258 37.5deg,#fff55a 45deg,#fff258 52.5deg,#ffeb51 60deg,#ffe046 67.5deg,#fcd23a 75deg,#f3c52d 82.5deg,#e9b821 90deg,#e1ad17 97.5deg,#d9a410 105deg,#d29d0b 112.5deg,#cd9808 120deg,#c99407 127.5deg,#c69206 135deg,#c38f06 142.5deg,#c18d05 150deg,#bf8c05 157.5deg,#be8b05 165deg,#be8b05 172.5deg,#be8b05 180deg,#be8b05 187.5deg,#be8b05 195deg,#be8b05 202.5deg,#be8b05 210deg,#be8b05 217.5deg,#be8b05 225deg,#be8b05 232.5deg,#be8b05 240deg,#be8b05 247.5deg,#be8b05 255deg,#be8b05 262.5deg,#be8b05 270deg,#be8b05 277.5deg,#be8b05 285deg,#bf8c05 292.5deg,#c18d05 300deg,#c38f06 307.5deg,#c69206 315deg,#c99407 322.5deg,#cd9808 330deg,#d29d0b 337.5deg,#d9a410 345deg,#e1ad17 352.5deg,#e9b821 360deg)"></div>
<div class="d" style="left:424.72px;top:220.92px;width:618.56px;height:618.56px;background:conic-gradient(#e7b521 0deg,#f0c12c 7.5deg,#face38 15deg,#ffdb43 22.5deg,#ffe54d 30deg,#ffec53 37.5deg,#ffee56 45deg,#ffec53 52.5deg,#ffe54d 60deg,#ffdb43 67.5deg,#face38 75deg,#f0c12c 82.5deg,#e7b521 90deg,#deab18 97.5deg,#d7a210 105deg,#d19c0c 112.5deg,#cd9708 120deg,#c99407 127.5deg,#c79206 135deg,#c59106 142.5deg,#c38f06 150deg,#c28e06 157.5deg,#c18d05 165deg,#c18d05 172.5deg,#c18d05 180deg,#c18d05 187.5deg,#c18d05 195deg,#c18d05 202.5deg,#c18d05 210deg,#c18d05 217.5deg,#c18d05 225deg,#c18d05 232.5deg,#c18d05 240deg,#c18d05 247.5deg,#c18d05 255deg,#c18d05 262.5deg,#c18d05 270deg,#c18d05 277.5deg,#c18d05 285deg,#c28e06 292.5deg,#c38f06 300deg,#c59106 307.5deg,#c79206 315deg,#c99407 322.5deg,#cd9708 330deg,#d19c0c 337.5deg,#d7a210 345deg,#deab18 352.5deg,#e7b521 360deg)"></div>
<div class="d" style="left:425.71px;top:221.91px;width:616.58px;height:616.58px;background:conic-gradient(#e5b321 0deg,#eebe2b 7.5deg,#f8ca37 15deg,#ffd641 22.5deg,#ffdf4a 30deg,#ffe650 37.5deg,#ffe852 45deg,#ffe650 52.5deg,#ffdf4a 60deg,#ffd641 67.5deg,#f8ca37 75deg,#eebe2b 82.5deg,#e5b321 90deg,#dca918 97.5deg,#d5a111 105deg,#d09b0c 112.5deg,#cc9709 120deg,#c99407 127.5deg,#c89307 135deg,#c79206 142.5deg,#c69106 150deg,#c59006 157.5deg,#c59006 165deg,#c49006 172.5deg,#c49006 180deg,#c49006 187.5deg,#c49006 195deg,#c49006 202.5deg,#c49006 210deg,#c49006 217.5deg,#c49006 225deg,#c49006 232.5deg,#c49006 240deg,#c49006 247.5deg,#c49006 255deg,#c49006 262.5deg,#c49006 270deg,#c49006 277.5deg,#c59006 285deg,#c59006 292.5deg,#c69106 300deg,#c79206 307.5deg,#c89307 315deg,#c99407 322.5deg,#cc9709 330deg,#d09b0c 337.5deg,#d5a111 345deg,#dca918 352.5deg,#e5b321 360deg)"></div>
<div class="d" style="left:426.70px;top:222.90px;width:614.60px;height:614.60px;background:conic-gradient(#dca71a 0deg,#e3ae21 7.5deg,#eab528 15deg,#efba2d 22.5deg,#f4bf32 30deg,#f7c235 37.5deg,#f8c336 45deg,#f7c235 52.5deg,#f4bf32 60deg,#efba2d 67.5deg,#eab528 75deg,#e3ae21 82.5deg,#dca71a 90deg,#d6a114 97.5deg,#d09b0e 105deg,#cc970a 112.5deg,#ca9508 120deg,#c89306 127.5deg,#c89306 135deg,#c89306 142.5deg,#c89306 150deg,#c89306 157.5deg,#c89306 165deg,#c89306 172.5deg,#c89306 180deg,#c89306 187.5deg,#c89306 195deg,#c89306 202.5deg,#c89306 210deg,#c89306 217.5deg,#c89306 225deg,#c89306 232.5deg,#c89306 240deg,#c89306 247.5deg,#c89306 255deg,#c89306 262.5deg,#c89306 270deg,#c89306 277.5deg,#c89306 285deg,#c89306 292.5deg,#c89306 300deg,#c89306 307.5deg,#c89306 315deg,#c89306 322.5deg,#ca9508 330deg,#cc970a 337.5deg,#d09b0e 345deg,#d6a114 352.5deg,#dca71a 360deg)"></div>
<div class="d" style="left:432.67px;top:228.87px;width:602.66px;height:602.66px;background:conic-gradient(#dca71a 0deg,#e3ae21 7.5deg,#eab528 15deg,#efba2d 22.5deg,#f4bf32 30deg,#f7c235 37.5deg,#f8c336 45deg,#f7c235 52.5deg,#f4bf32 60deg,#efba2d 67.5deg,#eab528 75deg,#e3ae21 82.5deg,#dca71a 90deg,#d6a114 97.5deg,#d09b0e 105deg,#cc970a 112.5deg,#ca9508 120deg,#c89306 127.5deg,#c89306 135deg,#c89306 142.5deg,#c89306 150deg,#c89306 157.5deg,#c89306 165deg,#c89306 172.5deg,#c89306 180deg,#c89306 187.5deg,#c89306 195deg,#c89306 202.5deg,#c89306 210deg,#c89306 217.5deg,#c89306 225deg,#c89306 232.5deg,#c89306 240deg,#c89306 247.5deg,#c89306 255deg,#c89306 262.5deg,#c89306 270deg,#c89306 277.5deg,#c89306 285deg,#c89306 292.5deg,#c89306 300deg,#c89306 307.5deg,#c89306 315deg,#c89306 322.5deg,#ca9508 330deg,#cc970a 337.5deg,#d09b0e 345deg,#d6a114 352.5deg,#dca71a 360deg)"></div>
<div class="d" style="left:438.64px;top:234.84px;width:590.71px;height:590.71px;background:conic-gradient(#dca71a 0deg,#e3ae21 7.5deg,#eab528 15deg,#efba2d 22.5deg,#f4bf32 30deg,#f7c235 37.5deg,#f8c336 45deg,#f7c235 52.5deg,#f4bf32 60deg,#efba2d 67.5deg,#eab528 75deg,#e3ae21 82.5deg,#dca71a 90deg,#d6a114 97.5deg,#d09b0e 105deg,#cc970a 112.5deg,#ca9508 120deg,#c89306 127.5deg,#c89306 135deg,#c89306 142.5deg,#c89306 150deg,#c89306 157.5deg,#c89306 165deg,#c89306 172.5deg,#c89306 180deg,#c89306 187.5deg,#c89306 195deg,#c89306 202.5deg,#c89306 210deg,#c89306 217.5deg,#c89306 225deg,#c89306 232.5deg,#c89306 240deg,#c89306 247.5deg,#c89306 255deg,#c89306 262.5deg,#c89306 270deg,#c89306 277.5deg,#c89306 285deg,#c89306 292.5deg,#c89306 300deg,#c89306 307.5deg,#c89306 315deg,#c89306 322.5deg,#ca9508 330deg,#cc970a 337.5deg,#d09b0e 345deg,#d6a114 352.5deg,#dca71a 360deg)"></div>
<div class="d" style="left:444.61px;top:240.81px;width:578.77px;height:578.77px;background:conic-gradient(#dca71a 0deg,#e3ae21 7.5deg,#eab528 15deg,#efba2d 22.5deg,#f4bf32 30deg,#f7c235 37.5deg,#f8c336 45deg,#f7c235 52.5deg,#f4bf32 60deg,#efba2d 67.5deg,#eab528 75deg,#e3ae21 82.5deg,#dca71a 90deg,#d6a114 97.5deg,#d09b0e 105deg,#cc970a 112.5deg,#ca9508 120deg,#c89306 127.5deg,#c89306 135deg,#c89306 142.5deg,#c89306 150deg,#c89306 157.5deg,#c89306 165deg,#c89306 172.5deg,#c89306 180deg,#c89306 187.5deg,#c89306 195deg,#c89306 202.5deg,#c89306 210deg,#c89306 217.5deg,#c89306 225deg,#c89306 232.5deg,#c89306 240deg,#c89306 247.5deg,#c89306 255deg,#c89306 262.5deg,#c89306 270deg,#c89306 277.5deg,#c89306 285deg,#c89306 292.5deg,#c89306 300deg,#c89306 307.5deg,#c89306 315deg,#c89306 322.5deg,#ca9508 330deg,#cc970a 337.5deg,#d09b0e 345deg,#d6a114 352.5deg,#dca71a 360deg)"></div>
<div class="d" style="left:450.59px;top:246.79px;width:566.83px;height:566.83px;background:conic-gradient(#dca71a 0deg,#e3ae21 7.5deg,#eab528 15deg,#efba2d 22.5deg,#f4bf32 30deg,#f7c235 37.5deg,#f8c336 45deg,#f7c235 52.5deg,#f4bf32 60deg,#efba2d 67.5deg,#eab528 75deg,#e3ae21 82.5deg,#dca71a 90deg,#d6a114 97.5deg,#d09b0e 105deg,#cc970a 112.5deg,#ca9508 120deg,#c89306 127.5deg,#c89306 135deg,#c89306 142.5deg,#c89306 150deg,#c89306 157.5deg,#c89306 165deg,#c89306 172.5deg,#c89306 180deg,#c89306 187.5deg,#c89306 195deg,#c89306 202.5deg,#c89306 210deg,#c89306 217.5deg,#c89306 225deg,#c89306 232.5deg,#c89306 240deg,#c89306 247.5deg,#c89306 255deg,#c89306 262.5deg,#c89306 270deg,#c89306 277.5deg,#c89306 285deg,#c89306 292.5deg,#c89306 300deg,#c89306 307.5deg,#c89306 315deg,#c89306 322.5deg,#ca9508 330deg,#cc970a 337.5deg,#d09b0e 345deg,#d6a114 352.5deg,#dca71a 360deg)"></div>
<div class="d" style="left:456.56px;top:252.76px;width:554.89px;height:554.89px;background:conic-gradient(#dca71a 0deg,#e3ae21 7.5deg,#eab528 15deg,#efba2d 22.5deg,#f4bf32 30deg,#f7c235 37.5deg,#f8c336 45deg,#f7c235 52.5deg,#f4bf32 60deg,#efba2d 67.5deg,#eab528 75deg,#e3ae21 82.5deg,#dca71a 90deg,#d6a114 97.5deg,#d09b0e 105deg,#cc970a 112.5deg,#ca9508 120deg,#c89306 127.5deg,#c89306 135deg,#c89306 142.5deg,#c89306 150deg,#c89306 157.5deg,#c89306 165deg,#c89306 172.5deg,#c89306 180deg,#c89306 187.5deg,#c89306 195deg,#c89306 202.5deg,#c89306 210deg,#c89306 217.5deg,#c89306 225deg,#c89306 232.5deg,#c89306 240deg,#c89306 247.5deg,#c89306 255deg,#c89306 262.5deg,#c89306 270deg,#c89306 277.5deg,#c89306 285deg,#c89306 292.5deg,#c89306 300deg,#c89306 307.5deg,#c89306 315deg,#c89306 322.5deg,#ca9508 330deg,#cc970a 337.5deg,#d09b0e 345deg,#d6a114 352.5deg,#dca71a 360deg)"></div>
<div class="d" style="left:462.53px;top:258.73px;width:542.94px;height:542.94px;background:conic-gradient(#dca71a 0deg,#e3ae21 7.5deg,#eab528 15deg,#efba2d 22.5deg,#f4bf32 30deg,#f7c235 37.5deg,#f8c336 45deg,#f7c235 52.5deg,#f4bf32 60deg,#efba2d 67.5deg,#eab528 75deg,#e3ae21 82.5deg,#dca71a 90deg,#d6a114 97.5deg,#d09b0e 105deg,#cc970a 112.5deg,#ca9508 120deg,#c89306 127.5deg,#c89306 135deg,#c89306 142.5deg,#c89306 150deg,#c89306 157.5deg,#c89306 165deg,#c89306 172.5deg,#c89306 180deg,#c89306 187.5deg,#c89306 195deg,#c89306 202.5deg,#c89306 210deg,#c89306 217.5deg,#c89306 225deg,#c89306 232.5deg,#c89306 240deg,#c89306 247.5deg,#c89306 255deg,#c89306 262.5deg,#c89306 270deg,#c89306 277.5deg,#c89306 285deg,#c89306 292.5deg,#c89306 300deg,#c89306 307.5deg,#c89306 315deg,#c89306 322.5deg,#ca9508 330deg,#cc970a 337.5deg,#d09b0e 345deg,#d6a114 352.5deg,#dca71a 360deg)"></div>
<div class="d" style="left:468.50px;top:264.70px;width:531.00px;height:531.00px;background:conic-gradient(#daa519 0deg,#e0ab1f 7.5deg,#e6b125 15deg,#ecb72b 22.5deg,#f0bb2f 30deg,#f3be32 37.5deg,#f4bf33 45deg,#f3be32 52.5deg,#f0bb2f 60deg,#ecb72b 67.5deg,#e6b125 75deg,#e0ab1f 82.5deg,#daa519 90deg,#d49f13 97.5deg,#cf9a0e 105deg,#cb960a 112.5deg,#c99408 120deg,#c99407 127.5deg,#c99407 135deg,#ca9608 142.5deg,#cb9709 150deg,#cc980a 157.5deg,#cd990b 165deg,#ce9a0c 172.5deg,#cf9b0d 180deg,#d09c0e 187.5deg,#d09d0e 195deg,#d19d0f 202.5deg,#d19e10 210deg,#d19e10 217.5deg,#d19e11 225deg,#d19e10 232.5deg,#d19e10 240deg,#d19d0f 247.5deg,#d09d0e 255deg,#d09c0e 262.5deg,#cf9b0d 270deg,#ce9a0c 277.5deg,#cd990b 285deg,#cc980a 292.5deg,#cb9709 300deg,#ca9608 307.5deg,#c99407 315deg,#c99407 322.5deg,#c99408 330deg,#cb960a 337.5deg,#cf9a0e 345deg,#d49f13 352.5deg,#daa519 360deg)"></div>
<div class="d" style="left:469.52px;top:265.72px;width:528.96px;height:528.96px;background:conic-gradient(#d5a016 0deg,#daa61c 7.5deg,#e0ab21 15deg,#e5b026 22.5deg,#e9b42a 30deg,#ebb72d 37.5deg,#ecb82e 45deg,#ebb72d 52.5deg,#e9b42a 60deg,#e5b026 67.5deg,#e0ab21 75deg,#daa61c 82.5deg,#d5a016 90deg,#cf9b11 97.5deg,#cb970d 105deg,#c89409 112.5deg,#c79308 120deg,#c79307 127.5deg,#c99408 135deg,#cb9609 142.5deg,#cc980a 150deg,#ce9a0b 157.5deg,#d09c0d 165deg,#d29e0e 172.5deg,#d3a010 180deg,#d4a111 187.5deg,#d5a313 195deg,#d6a414 202.5deg,#d6a515 210deg,#d6a516 217.5deg,#d6a516 225deg,#d6a516 232.5deg,#d6a515 240deg,#d6a414 247.5deg,#d5a313 255deg,#d4a111 262.5deg,#d3a010 270deg,#d29e0e 277.5deg,#d09c0d 285deg,#ce9a0b 292.5deg,#cc980a 300deg,#cb9609 307.5deg,#c99408 315deg,#c79307 322.5deg,#c79308 330deg,#c89409 337.5deg,#cb970d 345deg,#cf9b11 352.5deg,#d5a016 360deg)"></div>
<div class="d" style="left:470.54px;top:266.74px;width:526.93px;height:526.93px;background:conic-gradient(#d09c14 0deg,#d5a119 7.5deg,#daa61e 15deg,#deaa22 22.5deg,#e2ae26 30deg,#e4b028 37.5deg,#e5b129 45deg,#e4b028 52.5deg,#e2ae26 60deg,#deaa22 67.5deg,#daa61e 75deg,#d5a119 82.5deg,#d09c14 90deg,#cb970f 97.5deg,#c7930b 105deg,#c59109 112.5deg,#c59107 120deg,#c69207 127.5deg,#c89408 135deg,#cb9709 142.5deg,#ce9a0b 150deg,#d09d0d 157.5deg,#d3a00f 165deg,#d5a311 172.5deg,#d7a513 180deg,#d9a716 187.5deg,#daa918 195deg,#dbab1a 202.5deg,#dbac1c 210deg,#dcad1d 217.5deg,#dcad1d 225deg,#dcad1d 232.5deg,#dbac1c 240deg,#dbab1a 247.5deg,#daa918 255deg,#d9a716 262.5deg,#d7a513 270deg,#d5a311 277.5deg,#d3a00f 285deg,#d09d0d 292.5deg,#ce9a0b 300deg,#cb9709 307.5deg,#c89408 315deg,#c69207 322.5deg,#c59107 330deg,#c59109 337.5deg,#c7930b 345deg,#cb970f 352.5deg,#d09c14 360deg)"></div>
<div class="d" style="left:471.55px;top:267.75px;width:524.89px;height:524.89px;background:conic-gradient(#cb9812 0deg,#d09c16 7.5deg,#d4a11b 15deg,#d8a41e 22.5deg,#dba822 30deg,#dda923 37.5deg,#deaa24 45deg,#dda923 52.5deg,#dba822 60deg,#d8a41e 67.5deg,#d4a11b 75deg,#d09c16 82.5deg,#cb9812 90deg,#c7940e 97.5deg,#c4900a 105deg,#c28f08 112.5deg,#c38f07 120deg,#c49107 127.5deg,#c79409 135deg,#cb980a 142.5deg,#cf9b0c 150deg,#d29f0e 157.5deg,#d6a311 165deg,#d9a714 172.5deg,#dbab18 180deg,#deae1c 187.5deg,#dfb11f 195deg,#e0b322 202.5deg,#e1b425 210deg,#e1b626 217.5deg,#e2b627 225deg,#e1b626 232.5deg,#e1b425 240deg,#e0b322 247.5deg,#dfb11f 255deg,#deae1c 262.5deg,#dbab18 270deg,#d9a714 277.5deg,#d6a311 285deg,#d29f0e 292.5deg,#cf9b0c 300deg,#cb980a 307.5deg,#c79409 315deg,#c49107 322.5deg,#c38f07 330deg,#c28f08 337.5deg,#c4900a 345deg,#c7940e 352.5deg,#cb9812 360deg)"></div>
<div class="d" style="left:472.57px;top:268.77px;width:522.86px;height:522.86px;background:conic-gradient(#c79410 0deg,#cb9814 7.5deg,#cf9c18 15deg,#d29f1b 22.5deg,#d5a21e 30deg,#d7a420 37.5deg,#d7a420 45deg,#d7a420 52.5deg,#d5a21e 60deg,#d29f1b 67.5deg,#cf9c18 75deg,#cb9814 82.5deg,#c79410 90deg,#c3900c 97.5deg,#c18d09 105deg,#c08c07 112.5deg,#c08d07 120deg,#c39007 127.5deg,#c79409 135deg,#cb980b 142.5deg,#d09d0d 150deg,#d5a210 157.5deg,#d9a714 165deg,#ddac18 172.5deg,#e0b11d 180deg,#e2b522 187.5deg,#e4b927 195deg,#e6bc2c 202.5deg,#e7be2f 210deg,#e7bf31 217.5deg,#e7c032 225deg,#e7bf31 232.5deg,#e7be2f 240deg,#e6bc2c 247.5deg,#e4b927 255deg,#e2b522 262.5deg,#e0b11d 270deg,#ddac18 277.5deg,#d9a714 285deg,#d5a210 292.5deg,#d09d0d 300deg,#cb980b 307.5deg,#c79409 315deg,#c39007 322.5deg,#c08d07 330deg,#c08c07 337.5deg,#c18d09 345deg,#c3900c 352.5deg,#c79410 360deg)"></div>
<div class="d" style="left:473.59px;top:269.79px;width:520.82px;height:520.82px;background:conic-gradient(#c3900e 0deg,#c69412 7.5deg,#ca9715 15deg,#cd9a18 22.5deg,#cf9d1b 30deg,#d19e1c 37.5deg,#d19f1d 45deg,#d19e1c 52.5deg,#cf9d1b 60deg,#cd9a18 67.5deg,#ca9715 75deg,#c69412 82.5deg,#c3900e 90deg,#bf8d0b 97.5deg,#bd8b08 105deg,#bd8a07 112.5deg,#be8c07 120deg,#c28f08 127.5deg,#c69409 135deg,#cc990c 142.5deg,#d19f0e 150deg,#d7a512 157.5deg,#dcab17 165deg,#e0b11d 172.5deg,#e4b723 180deg,#e7bc2a 187.5deg,#eac131 195deg,#ebc537 202.5deg,#ecc83c 210deg,#edca3f 217.5deg,#edca40 225deg,#edca3f 232.5deg,#ecc83c 240deg,#ebc537 247.5deg,#eac131 255deg,#e7bc2a 262.5deg,#e4b723 270deg,#e0b11d 277.5deg,#dcab17 285deg,#d7a512 292.5deg,#d19f0e 300deg,#cc990c 307.5deg,#c69409 315deg,#c28f08 322.5deg,#be8c07 330deg,#bd8a07 337.5deg,#bd8b08 345deg,#bf8d0b 352.5deg,#c3900e 360deg)"></div>
<div class="d" style="left:474.61px;top:270.81px;width:518.79px;height:518.79px;background:conic-gradient(#bf8d0d 0deg,#c29010 7.5deg,#c59313 15deg,#c89515 22.5deg,#ca9818 30deg,#cb9919 37.5deg,#cc9919 45deg,#cb9919 52.5deg,#ca9818 60deg,#c89515 67.5deg,#c59313 75deg,#c29010 82.5deg,#bf8d0d 90deg,#bc8a0a 97.5deg,#ba8807 105deg,#ba8806 112.5deg,#bc8a06 120deg,#c08e08 127.5deg,#c6930a 135deg,#cc9a0c 142.5deg,#d2a010 150deg,#d9a814 157.5deg,#dfaf1a 165deg,#e4b722 172.5deg,#e8be2a 180deg,#ecc433 187.5deg,#eeca3c 195deg,#f0ce43 202.5deg,#f2d24a 210deg,#f2d44e 217.5deg,#f3d54f 225deg,#f2d44e 232.5deg,#f2d24a 240deg,#f0ce43 247.5deg,#eeca3c 255deg,#ecc433 262.5deg,#e8be2a 270deg,#e4b722 277.5deg,#dfaf1a 285deg,#d9a814 292.5deg,#d2a010 300deg,#cc9a0c 307.5deg,#c6930a 315deg,#c08e08 322.5deg,#bc8a06 330deg,#ba8806 337.5deg,#ba8807 345deg,#bc8a0a 352.5deg,#bf8d0d 360deg)"></div>
<div class="d" style="left:475.62px;top:271.83px;width:516.75px;height:516.75px;background:conic-gradient(#b9880b 0deg,#bb8a0e 7.5deg,#be8d10 15deg,#c18f13 22.5deg,#c29115 30deg,#c49316 37.5deg,#c49316 45deg,#c49316 52.5deg,#c29115 60deg,#c18f13 67.5deg,#be8d10 75deg,#bb8a0e 82.5deg,#b9880b 90deg,#b68508 97.5deg,#b58306 105deg,#b58406 112.5deg,#b88706 120deg,#bd8b07 127.5deg,#c39209 135deg,#ca990c 142.5deg,#d2a010 150deg,#d9a915 157.5deg,#e0b11c 165deg,#e6ba25 172.5deg,#ebc230 180deg,#efca3b 187.5deg,#f2d146 195deg,#f4d750 202.5deg,#f5db58 210deg,#f6de5d 217.5deg,#f7df5f 225deg,#f6de5d 232.5deg,#f5db58 240deg,#f4d750 247.5deg,#f2d146 255deg,#efca3b 262.5deg,#ebc230 270deg,#e6ba25 277.5deg,#e0b11c 285deg,#d9a915 292.5deg,#d2a010 300deg,#ca990c 307.5deg,#c39209 315deg,#bd8b07 322.5deg,#b88706 330deg,#b58406 337.5deg,#b58306 345deg,#b68508 352.5deg,#b9880b 360deg)"></div>
<div class="d" style="left:476.64px;top:272.84px;width:514.71px;height:514.71px;background:conic-gradient(#b1810a 0deg,#b3840c 7.5deg,#b5860e 15deg,#b88811 22.5deg,#b98a12 30deg,#ba8b13 37.5deg,#bb8b14 45deg,#ba8b13 52.5deg,#b98a12 60deg,#b88811 67.5deg,#b5860e 75deg,#b3840c 82.5deg,#b1810a 90deg,#ae7f07 97.5deg,#ad7e06 105deg,#ae7f05 112.5deg,#b28205 120deg,#b88706 127.5deg,#bf8e09 135deg,#c7960b 142.5deg,#d09f0f 150deg,#d8a815 157.5deg,#e0b21d 165deg,#e7bc28 172.5deg,#edc634 180deg,#f1cf42 187.5deg,#f4d74f 195deg,#f7de5c 202.5deg,#f8e366 210deg,#f9e66c 217.5deg,#fae76e 225deg,#f9e66c 232.5deg,#f8e366 240deg,#f7de5c 247.5deg,#f4d74f 255deg,#f1cf42 262.5deg,#edc634 270deg,#e7bc28 277.5deg,#e0b21d 285deg,#d8a815 292.5deg,#d09f0f 300deg,#c7960b 307.5deg,#bf8e09 315deg,#b88706 322.5deg,#b28205 330deg,#ae7f05 337.5deg,#ad7e06 345deg,#ae7f07 352.5deg,#b1810a 360deg)"></div>
<div class="d" style="left:477.66px;top:273.86px;width:512.68px;height:512.68px;background:conic-gradient(#a97b08 0deg,#ab7d0a 7.5deg,#ad7f0c 15deg,#af810e 22.5deg,#b08310 30deg,#b18411 37.5deg,#b28411 45deg,#b18411 52.5deg,#b08310 60deg,#af810e 67.5deg,#ad7f0c 75deg,#ab7d0a 82.5deg,#a97b08 90deg,#a77906 97.5deg,#a67805 105deg,#a77a04 112.5deg,#ac7d04 120deg,#b28306 127.5deg,#ba8b08 135deg,#c4930a 142.5deg,#cd9d0e 150deg,#d7a714 157.5deg,#e1b31e 165deg,#e8be2a 172.5deg,#efc938 180deg,#f3d348 187.5deg,#f7dc58 195deg,#f9e467 202.5deg,#fbea73 210deg,#fcee7b 217.5deg,#fcef7d 225deg,#fcee7b 232.5deg,#fbea73 240deg,#f9e467 247.5deg,#f7dc58 255deg,#f3d348 262.5deg,#efc938 270deg,#e8be2a 277.5deg,#e1b31e 285deg,#d7a714 292.5deg,#cd9d0e 300deg,#c4930a 307.5deg,#ba8b08 315deg,#b28306 322.5deg,#ac7d04 330deg,#a77a04 337.5deg,#a67805 345deg,#a77906 352.5deg,#a97b08 360deg)"></div>
<div class="d" style="left:478.68px;top:274.88px;width:510.64px;height:510.64px;background:conic-gradient(#a17507 0deg,#a37709 7.5deg,#a5790b 15deg,#a67b0c 22.5deg,#a87c0e 30deg,#a87d0f 37.5deg,#a97d0f 45deg,#a87d0f 52.5deg,#a87c0e 60deg,#a67b0c 67.5deg,#a5790b 75deg,#a37709 82.5deg,#a17507 90deg,#9f7305 97.5deg,#9e7304 105deg,#a17403 112.5deg,#a57904 120deg,#ad7f05 127.5deg,#b68707 135deg,#c09009 142.5deg,#cb9b0d 150deg,#d6a714 157.5deg,#e1b31e 165deg,#e9bf2c 172.5deg,#f0cb3c 180deg,#f5d74e 187.5deg,#f8e160 195deg,#fbe971 202.5deg,#fcf07e 210deg,#fdf487 217.5deg,#fef68a 225deg,#fdf487 232.5deg,#fcf07e 240deg,#fbe971 247.5deg,#f8e160 255deg,#f5d74e 262.5deg,#f0cb3c 270deg,#e9bf2c 277.5deg,#e1b31e 285deg,#d6a714 292.5deg,#cb9b0d 300deg,#c09009 307.5deg,#b68707 315deg,#ad7f05 322.5deg,#a57904 330deg,#a17403 337.5deg,#9e7304 345deg,#9f7305 352.5deg,#a17507 360deg)"></div>
<div class="d" style="left:479.70px;top:275.90px;width:508.61px;height:508.61px;background:conic-gradient(#996f06 0deg,#9b7107 7.5deg,#9c7209 15deg,#9e740b 22.5deg,#9f750c 30deg,#a0760d 37.5deg,#a0760d 45deg,#a0760d 52.5deg,#9f750c 60deg,#9e740b 67.5deg,#9c7209 75deg,#9b7107 82.5deg,#996f06 90deg,#976d04 97.5deg,#976d03 105deg,#9a6f03 112.5deg,#9f7403 120deg,#a77b04 127.5deg,#b28406 135deg,#bd8e08 142.5deg,#c9990c 150deg,#d5a613 157.5deg,#e0b31e 165deg,#eac02c 172.5deg,#f1cd3e 180deg,#f6d951 187.5deg,#fae465 195deg,#fced77 202.5deg,#fdf486 210deg,#fef98f 217.5deg,#fffa92 225deg,#fef98f 232.5deg,#fdf486 240deg,#fced77 247.5deg,#fae465 255deg,#f6d951 262.5deg,#f1cd3e 270deg,#eac02c 277.5deg,#e0b31e 285deg,#d5a613 292.5deg,#c9990c 300deg,#bd8e08 307.5deg,#b28406 315deg,#a77b04 322.5deg,#9f7403 330deg,#9a6f03 337.5deg,#976d03 345deg,#976d04 352.5deg,#996f06 360deg)"></div>
<div class="d" style="left:480.71px;top:276.91px;width:506.57px;height:506.57px;background:conic-gradient(#916905 0deg,#936b06 7.5deg,#946c08 15deg,#966d09 22.5deg,#976e0a 30deg,#976f0b 37.5deg,#986f0b 45deg,#976f0b 52.5deg,#976e0a 60deg,#966d09 67.5deg,#946c08 75deg,#936b06 82.5deg,#916905 90deg,#906803 97.5deg,#906702 105deg,#936a02 112.5deg,#996f02 120deg,#a27703 127.5deg,#ad8005 135deg,#ba8b07 142.5deg,#c7970b 150deg,#d4a412 157.5deg,#e0b21d 165deg,#eac02c 172.5deg,#f2ce3e 180deg,#f7da52 187.5deg,#fae567 195deg,#fcee79 202.5deg,#fef689 210deg,#fffa93 217.5deg,#fffc96 225deg,#fffa93 232.5deg,#fef689 240deg,#fcee79 247.5deg,#fae567 255deg,#f7da52 262.5deg,#f2ce3e 270deg,#eac02c 277.5deg,#e0b21d 285deg,#d4a412 292.5deg,#c7970b 300deg,#ba8b07 307.5deg,#ad8005 315deg,#a27703 322.5deg,#996f02 330deg,#936a02 337.5deg,#906702 345deg,#906803 352.5deg,#916905 360deg)"></div>
<div class="d" style="left:481.73px;top:277.93px;width:504.54px;height:504.54px;background:conic-gradient(#8c6504 0deg,#8d6705 7.5deg,#8f6807 15deg,#906908 22.5deg,#916a09 30deg,#916b09 37.5deg,#926b0a 45deg,#916b09 52.5deg,#916a09 60deg,#906908 67.5deg,#8f6807 75deg,#8d6705 82.5deg,#8c6504 90deg,#8b6403 97.5deg,#8b6402 105deg,#8e6702 112.5deg,#956c02 120deg,#9f7403 127.5deg,#aa7e04 135deg,#b88906 142.5deg,#c6960a 150deg,#d3a411 157.5deg,#e0b21b 165deg,#ebc02a 172.5deg,#f2ce3c 180deg,#f7da50 187.5deg,#fbe464 195deg,#fdee77 202.5deg,#fef586 210deg,#fff990 217.5deg,#fffb94 225deg,#fff990 232.5deg,#fef586 240deg,#fdee77 247.5deg,#fbe464 255deg,#f7da50 262.5deg,#f2ce3c 270deg,#ebc02a 277.5deg,#e0b21b 285deg,#d3a411 292.5deg,#c6960a 300deg,#b88906 307.5deg,#aa7e04 315deg,#9f7403 322.5deg,#956c02 330deg,#8e6702 337.5deg,#8b6402 345deg,#8b6403 352.5deg,#8c6504 360deg)"></div>
<div class="d" style="left:482.75px;top:278.95px;width:502.50px;height:502.50px;background:conic-gradient(#876104 0deg,#886305 7.5deg,#896406 15deg,#8b6507 22.5deg,#8b6608 30deg,#8c6608 37.5deg,#8c6609 45deg,#8c6608 52.5deg,#8b6608 60deg,#8b6507 67.5deg,#896406 75deg,#886305 82.5deg,#876104 90deg,#866002 97.5deg,#866002 105deg,#8a6301 112.5deg,#916902 120deg,#9b7202 127.5deg,#a87c04 135deg,#b68805 142.5deg,#c49509 150deg,#d3a30f 157.5deg,#e0b119 165deg,#ebbf27 172.5deg,#f3cc38 180deg,#f8d84b 187.5deg,#fbe25e 195deg,#fdeb70 202.5deg,#fef17f 210deg,#fef688 217.5deg,#fef78b 225deg,#fef688 232.5deg,#fef17f 240deg,#fdeb70 247.5deg,#fbe25e 255deg,#f8d84b 262.5deg,#f3cc38 270deg,#ebbf27 277.5deg,#e0b119 285deg,#d3a30f 292.5deg,#c49509 300deg,#b68805 307.5deg,#a87c04 315deg,#9b7202 322.5deg,#916902 330deg,#8a6301 337.5deg,#866002 345deg,#866002 352.5deg,#876104 360deg)"></div>
<div class="d" style="left:483.77px;top:279.97px;width:500.46px;height:500.46px;background:conic-gradient(#825e03 0deg,#835f04 7.5deg,#846005 15deg,#856106 22.5deg,#866207 30deg,#866207 37.5deg,#876208 45deg,#866207 52.5deg,#866207 60deg,#856106 67.5deg,#846005 75deg,#835f04 82.5deg,#825e03 90deg,#815d02 97.5deg,#825d01 105deg,#866001 112.5deg,#8d6701 120deg,#986f02 127.5deg,#a57a03 135deg,#b48605 142.5deg,#c39308 150deg,#d2a10d 157.5deg,#e0b016 165deg,#ebbd23 172.5deg,#f2ca32 180deg,#f8d544 187.5deg,#fbde55 195deg,#fce666 202.5deg,#fdec73 210deg,#fef07b 217.5deg,#fef17e 225deg,#fef07b 232.5deg,#fdec73 240deg,#fce666 247.5deg,#fbde55 255deg,#f8d544 262.5deg,#f2ca32 270deg,#ebbd23 277.5deg,#e0b016 285deg,#d2a10d 292.5deg,#c39308 300deg,#b48605 307.5deg,#a57a03 315deg,#986f02 322.5deg,#8d6701 330deg,#866001 337.5deg,#825d01 345deg,#815d02 352.5deg,#825e03 360deg)"></div>
<div class="d" style="left:484.79px;top:280.99px;width:498.43px;height:498.43px;background:conic-gradient(#7d5a03 0deg,#7e5b04 7.5deg,#7f5c05 15deg,#805d06 22.5deg,#815e06 30deg,#815e07 37.5deg,#815e07 45deg,#815e07 52.5deg,#815e06 60deg,#805d06 67.5deg,#7f5c05 75deg,#7e5b04 82.5deg,#7d5a03 90deg,#7d5902 97.5deg,#7d5a01 105deg,#815d01 112.5deg,#896401 120deg,#956c02 127.5deg,#a27703 135deg,#b18404 142.5deg,#c19106 150deg,#d09f0b 157.5deg,#dead13 165deg,#e9ba1e 172.5deg,#f1c62b 180deg,#f6d03a 187.5deg,#fad94a 195deg,#fbe058 202.5deg,#fce563 210deg,#fde96b 217.5deg,#fdea6d 225deg,#fde96b 232.5deg,#fce563 240deg,#fbe058 247.5deg,#fad94a 255deg,#f6d03a 262.5deg,#f1c62b 270deg,#e9ba1e 277.5deg,#dead13 285deg,#d09f0b 292.5deg,#c19106 300deg,#b18404 307.5deg,#a27703 315deg,#956c02 322.5deg,#896401 330deg,#815d01 337.5deg,#7d5a01 345deg,#7d5902 352.5deg,#7d5a03 360deg)"></div>
<div class="d" style="left:485.80px;top:282.00px;width:496.39px;height:496.39px;background:conic-gradient(#795703 0deg,#795803 7.5deg,#7a5804 15deg,#7b5905 22.5deg,#7c5a05 30deg,#7c5a06 37.5deg,#7c5a06 45deg,#7c5a06 52.5deg,#7c5a05 60deg,#7b5905 67.5deg,#7a5804 75deg,#795803 82.5deg,#795703 90deg,#785602 97.5deg,#795601 105deg,#7d5a01 112.5deg,#856001 120deg,#916a01 127.5deg,#9f7502 135deg,#ae8103 142.5deg,#be8e05 150deg,#ce9c09 157.5deg,#dcaa0f 165deg,#e7b618 172.5deg,#f0c124 180deg,#f5cb30 187.5deg,#f8d33d 195deg,#fad949 202.5deg,#fbdd52 210deg,#fce059 217.5deg,#fce15b 225deg,#fce059 232.5deg,#fbdd52 240deg,#fad949 247.5deg,#f8d33d 255deg,#f5cb30 262.5deg,#f0c124 270deg,#e7b618 277.5deg,#dcaa0f 285deg,#ce9c09 292.5deg,#be8e05 300deg,#ae8103 307.5deg,#9f7502 315deg,#916a01 322.5deg,#856001 330deg,#7d5a01 337.5deg,#795601 345deg,#785602 352.5deg,#795703 360deg)"></div>
<div class="d" style="left:486.82px;top:283.02px;width:494.36px;height:494.36px;background:conic-gradient(#755402 0deg,#755503 7.5deg,#765504 15deg,#775604 22.5deg,#775705 30deg,#785705 37.5deg,#785705 45deg,#785705 52.5deg,#775705 60deg,#775604 67.5deg,#765504 75deg,#755503 82.5deg,#755402 90deg,#745302 97.5deg,#755401 105deg,#7a5701 112.5deg,#825e01 120deg,#8e6701 127.5deg,#9c7301 135deg,#ac7f02 142.5deg,#bc8c04 150deg,#cc9a07 157.5deg,#daa70c 165deg,#e6b313 172.5deg,#eebd1c 180deg,#f4c526 187.5deg,#f7cc30 195deg,#f9d13a 202.5deg,#fad541 210deg,#fad846 217.5deg,#fad848 225deg,#fad846 232.5deg,#fad541 240deg,#f9d13a 247.5deg,#f7cc30 255deg,#f4c526 262.5deg,#eebd1c 270deg,#e6b313 277.5deg,#daa70c 285deg,#cc9a07 292.5deg,#bc8c04 300deg,#ac7f02 307.5deg,#9c7301 315deg,#8e6701 322.5deg,#825e01 330deg,#7a5701 337.5deg,#755401 345deg,#745302 352.5deg,#755402 360deg)"></div>
<div class="d" style="left:487.84px;top:284.04px;width:492.32px;height:492.32px;background:conic-gradient(#735302 0deg,#735303 7.5deg,#745403 15deg,#755404 22.5deg,#755504 30deg,#755505 37.5deg,#755505 45deg,#755505 52.5deg,#755504 60deg,#755404 67.5deg,#745403 75deg,#735303 82.5deg,#735302 90deg,#725201 97.5deg,#735301 105deg,#785601 112.5deg,#805d00 120deg,#8c6601 127.5deg,#9b7101 135deg,#ab7e01 142.5deg,#bb8b02 150deg,#cb9805 157.5deg,#d9a409 165deg,#e4af0e 172.5deg,#edb815 180deg,#f2c01c 187.5deg,#f6c624 195deg,#f8ca2b 202.5deg,#f9cd31 210deg,#f9cf35 217.5deg,#f9d036 225deg,#f9cf35 232.5deg,#f9cd31 240deg,#f8ca2b 247.5deg,#f6c624 255deg,#f2c01c 262.5deg,#edb815 270deg,#e4af0e 277.5deg,#d9a409 285deg,#cb9805 292.5deg,#bb8b02 300deg,#ab7e01 307.5deg,#9b7101 315deg,#8c6601 322.5deg,#805d00 330deg,#785601 337.5deg,#735301 345deg,#725201 352.5deg,#735302 360deg)"></div>
<div class="d" style="left:488.86px;top:285.06px;width:490.29px;height:490.29px;background:conic-gradient(#715102 0deg,#715202 7.5deg,#725203 15deg,#725303 22.5deg,#735304 30deg,#735404 37.5deg,#735404 45deg,#735404 52.5deg,#735304 60deg,#725303 67.5deg,#725203 75deg,#715202 82.5deg,#715102 90deg,#705101 97.5deg,#715101 105deg,#765500 112.5deg,#7f5c00 120deg,#8b6500 127.5deg,#997000 135deg,#a97c00 142.5deg,#ba8901 150deg,#c99603 157.5deg,#d7a205 165deg,#e3ac09 172.5deg,#ebb50e 180deg,#f1bb14 187.5deg,#f5c019 195deg,#f6c41e 202.5deg,#f7c623 210deg,#f8c825 217.5deg,#f8c826 225deg,#f8c825 232.5deg,#f7c623 240deg,#f6c41e 247.5deg,#f5c019 255deg,#f1bb14 262.5deg,#ebb50e 270deg,#e3ac09 277.5deg,#d7a205 285deg,#c99603 292.5deg,#ba8901 300deg,#a97c00 307.5deg,#997000 315deg,#8b6500 322.5deg,#7f5c00 330deg,#765500 337.5deg,#715101 345deg,#705101 352.5deg,#715102 360deg)"></div>
<div class="d" style="left:489.88px;top:286.08px;width:488.25px;height:488.25px;background:conic-gradient(#6f5002 0deg,#6f5102 7.5deg,#705103 15deg,#705203 22.5deg,#715203 30deg,#715204 37.5deg,#715204 45deg,#715204 52.5deg,#715203 60deg,#705203 67.5deg,#705103 75deg,#6f5102 82.5deg,#6f5002 90deg,#6e5001 97.5deg,#6f5001 105deg,#745400 112.5deg,#7d5b00 120deg,#896400 127.5deg,#986f00 135deg,#a87b00 142.5deg,#b88700 150deg,#c79401 157.5deg,#d59f03 165deg,#e0a906 172.5deg,#e9b009 180deg,#efb60d 187.5deg,#f2bb11 195deg,#f4be14 202.5deg,#f5bf17 210deg,#f5c019 217.5deg,#f5c11a 225deg,#f5c019 232.5deg,#f5bf17 240deg,#f4be14 247.5deg,#f2bb11 255deg,#efb60d 262.5deg,#e9b009 270deg,#e0a906 277.5deg,#d59f03 285deg,#c79401 292.5deg,#b88700 300deg,#a87b00 307.5deg,#986f00 315deg,#896400 322.5deg,#7d5b00 330deg,#745400 337.5deg,#6f5001 345deg,#6e5001 352.5deg,#6f5002 360deg)"></div>
<div class="d" style="left:490.89px;top:287.09px;width:486.21px;height:486.21px;background:conic-gradient(#6d4f01 0deg,#6d4f02 7.5deg,#6e5002 15deg,#6e5003 22.5deg,#6e5003 30deg,#6f5103 37.5deg,#6f5103 45deg,#6f5103 52.5deg,#6e5003 60deg,#6e5003 67.5deg,#6e5002 75deg,#6d4f02 82.5deg,#6d4f01 90deg,#6c4e01 97.5deg,#6d4f01 105deg,#725300 112.5deg,#7b5900 120deg,#876200 127.5deg,#956d00 135deg,#a57900 142.5deg,#b58500 150deg,#c49101 157.5deg,#d29c02 165deg,#dda504 172.5deg,#e5ac06 180deg,#ebb109 187.5deg,#efb50b 195deg,#f1b70e 202.5deg,#f1b90f 210deg,#f2ba11 217.5deg,#f2ba11 225deg,#f2ba11 232.5deg,#f1b90f 240deg,#f1b70e 247.5deg,#efb50b 255deg,#ebb109 262.5deg,#e5ac06 270deg,#dda504 277.5deg,#d29c02 285deg,#c49101 292.5deg,#b58500 300deg,#a57900 307.5deg,#956d00 315deg,#876200 322.5deg,#7b5900 330deg,#725300 337.5deg,#6d4f01 345deg,#6c4e01 352.5deg,#6d4f01 360deg)"></div>
<div class="d" style="left:491.91px;top:288.11px;width:484.18px;height:484.18px;background:conic-gradient(#6b4e01 0deg,#6b4e02 7.5deg,#6c4e02 15deg,#6c4f02 22.5deg,#6c4f03 30deg,#6c4f03 37.5deg,#6c4f03 45deg,#6c4f03 52.5deg,#6c4f03 60deg,#6c4f02 67.5deg,#6c4e02 75deg,#6b4e02 82.5deg,#6b4e01 90deg,#6a4d01 97.5deg,#6c4e01 105deg,#705200 112.5deg,#795800 120deg,#856100 127.5deg,#936b00 135deg,#a37700 142.5deg,#b28300 150deg,#c18e01 157.5deg,#cf9801 165deg,#daa102 172.5deg,#e2a804 180deg,#e8ad05 187.5deg,#ebb007 195deg,#edb209 202.5deg,#eeb30a 210deg,#eeb40b 217.5deg,#eeb40b 225deg,#eeb40b 232.5deg,#eeb30a 240deg,#edb209 247.5deg,#ebb007 255deg,#e8ad05 262.5deg,#e2a804 270deg,#daa102 277.5deg,#cf9801 285deg,#c18e01 292.5deg,#b28300 300deg,#a37700 307.5deg,#936b00 315deg,#856100 322.5deg,#795800 330deg,#705200 337.5deg,#6c4e01 345deg,#6a4d01 352.5deg,#6b4e01 360deg)"></div>
<div class="d" style="left:492.93px;top:289.13px;width:482.14px;height:482.14px;background:conic-gradient(#6b4d01 0deg,#6b4e01 7.5deg,#6b4e02 15deg,#6c4e02 22.5deg,#6c4f02 30deg,#6c4f03 37.5deg,#6c4f03 45deg,#6c4f03 52.5deg,#6c4f02 60deg,#6c4e02 67.5deg,#6b4e02 75deg,#6b4e01 82.5deg,#6b4d01 90deg,#6a4d01 97.5deg,#6b4e00 105deg,#705100 112.5deg,#795700 120deg,#846000 127.5deg,#926a00 135deg,#a17600 142.5deg,#b18100 150deg,#bf8c00 157.5deg,#cc9601 165deg,#d79e01 172.5deg,#dfa402 180deg,#e4a903 187.5deg,#e8ab04 195deg,#e9ad05 202.5deg,#eaae06 210deg,#eaae06 217.5deg,#eaaf07 225deg,#eaae06 232.5deg,#eaae06 240deg,#e9ad05 247.5deg,#e8ab04 255deg,#e4a903 262.5deg,#dfa402 270deg,#d79e01 277.5deg,#cc9601 285deg,#bf8c00 292.5deg,#b18100 300deg,#a17600 307.5deg,#926a00 315deg,#846000 322.5deg,#795700 330deg,#705100 337.5deg,#6b4e00 345deg,#6a4d01 352.5deg,#6b4d01 360deg)"></div>
<div class="d" style="left:493.95px;top:290.15px;width:480.11px;height:480.11px;background:conic-gradient(#6b4e01 0deg,#6c4e01 7.5deg,#6c4e02 15deg,#6c4f02 22.5deg,#6c4f02 30deg,#6c4f02 37.5deg,#6d4f02 45deg,#6c4f02 52.5deg,#6c4f02 60deg,#6c4f02 67.5deg,#6c4e02 75deg,#6c4e01 82.5deg,#6b4e01 90deg,#6b4d01 97.5deg,#6c4e00 105deg,#715200 112.5deg,#795800 120deg,#846000 127.5deg,#916a00 135deg,#a07400 142.5deg,#af7f00 150deg,#bd8a00 157.5deg,#ca9300 165deg,#d49b01 172.5deg,#dca101 180deg,#e1a502 187.5deg,#e4a702 195deg,#e6a903 202.5deg,#e7aa03 210deg,#e7aa04 217.5deg,#e7aa04 225deg,#e7aa04 232.5deg,#e7aa03 240deg,#e6a903 247.5deg,#e4a702 255deg,#e1a502 262.5deg,#dca101 270deg,#d49b01 277.5deg,#ca9300 285deg,#bd8a00 292.5deg,#af7f00 300deg,#a07400 307.5deg,#916a00 315deg,#846000 322.5deg,#795800 330deg,#715200 337.5deg,#6c4e00 345deg,#6b4d01 352.5deg,#6b4e01 360deg)"></div>
<div class="d" style="left:494.96px;top:291.16px;width:478.07px;height:478.07px;background:conic-gradient(#6c4e01 0deg,#6c4e01 7.5deg,#6c4f01 15deg,#6d4f02 22.5deg,#6d4f02 30deg,#6d4f02 37.5deg,#6d4f02 45deg,#6d4f02 52.5deg,#6d4f02 60deg,#6d4f02 67.5deg,#6c4f01 75deg,#6c4e01 82.5deg,#6c4e01 90deg,#6c4e01 97.5deg,#6d4f00 105deg,#715200 112.5deg,#795800 120deg,#845f00 127.5deg,#916900 135deg,#9f7300 142.5deg,#ae7e00 150deg,#bb8800 157.5deg,#c79100 165deg,#d19800 172.5deg,#d99d01 180deg,#dea101 187.5deg,#e1a401 195deg,#e2a502 202.5deg,#e3a602 210deg,#e3a602 217.5deg,#e3a602 225deg,#e3a602 232.5deg,#e3a602 240deg,#e2a502 247.5deg,#e1a401 255deg,#dea101 262.5deg,#d99d01 270deg,#d19800 277.5deg,#c79100 285deg,#bb8800 292.5deg,#ae7e00 300deg,#9f7300 307.5deg,#916900 315deg,#845f00 322.5deg,#795800 330deg,#715200 337.5deg,#6d4f00 345deg,#6c4e01 352.5deg,#6c4e01 360deg)"></div>
<div class="d" style="left:495.98px;top:292.18px;width:476.04px;height:476.04px;background:conic-gradient(#6c4f01 0deg,#6d4f01 7.5deg,#6d4f01 15deg,#6d4f01 22.5deg,#6d4f02 30deg,#6d5002 37.5deg,#6d5002 45deg,#6d5002 52.5deg,#6d4f02 60deg,#6d4f01 67.5deg,#6d4f01 75deg,#6d4f01 82.5deg,#6c4f01 90deg,#6c4e01 97.5deg,#6d4f00 105deg,#725200 112.5deg,#795800 120deg,#845f00 127.5deg,#906800 135deg,#9e7200 142.5deg,#ac7c00 150deg,#b98600 157.5deg,#c58e00 165deg,#ce9500 172.5deg,#d69a00 180deg,#da9e01 187.5deg,#dda001 195deg,#dfa201 202.5deg,#e0a201 210deg,#e0a201 217.5deg,#e0a201 225deg,#e0a201 232.5deg,#e0a201 240deg,#dfa201 247.5deg,#dda001 255deg,#da9e01 262.5deg,#d69a00 270deg,#ce9500 277.5deg,#c58e00 285deg,#b98600 292.5deg,#ac7c00 300deg,#9e7200 307.5deg,#906800 315deg,#845f00 322.5deg,#795800 330deg,#725200 337.5deg,#6d4f00 345deg,#6c4e01 352.5deg,#6c4f01 360deg)"></div>
<div class="d" style="left:497.00px;top:293.20px;width:474.00px;height:474.00px;background:#fff"></div>
<svg width="1445" height="1004" style="left:0;top:0">
<circle cx="734" cy="530.2" r="336" fill="none" stroke="#000" stroke-width="1.8"/>
<circle cx="734" cy="530.2" r="307.3" fill="none" stroke="#000" stroke-width="1.3"/>
<circle cx="734" cy="530.2" r="265.5" fill="none" stroke="#000" stroke-width="1.3"/>
<circle cx="734" cy="530.2" r="237" fill="none" stroke="#000" stroke-width="1.8"/>
<path d="M578.10 304.63 A274.2 274.2 0 0 1 627.96 277.33 L636.63 297.99 A251.8 251.8 0 0 0 590.84 323.06 Z" fill="#ca9508" stroke="#000" stroke-width="1.3"/>
<path d="M900.35 312.23 A274.2 274.2 0 0 1 941.72 351.21 L924.75 365.84 A251.8 251.8 0 0 0 886.76 330.03 Z" fill="#f8c336" stroke="#000" stroke-width="1.3"/>
<path d="M992.71 621.05 A274.2 274.2 0 0 1 968.42 672.45 L949.27 660.83 A251.8 251.8 0 0 0 971.58 613.63 Z" fill="#cb9609" stroke="#000" stroke-width="1.3"/>
<path d="M727.54 804.32 A274.2 274.2 0 0 1 671.15 797.10 L676.29 775.30 A251.8 251.8 0 0 0 728.07 781.93 Z" fill="#c89306" stroke="#000" stroke-width="1.3"/>
<path d="M471.30 608.77 A274.2 274.2 0 0 1 460.74 552.91 L483.06 551.05 A251.8 251.8 0 0 0 492.76 602.35 Z" fill="#c89306" stroke="#000" stroke-width="1.3"/>
<line x1="826.92" y1="237.28" x2="835.60" y2="209.93" stroke="#000" stroke-width="1.4"/>
<line x1="641.08" y1="823.12" x2="632.40" y2="850.47" stroke="#000" stroke-width="1.4"/>
<circle cx="487.6" cy="364.7" r="0.75" fill="#333"/><circle cx="506" cy="416.3" r="0.75" fill="#333"/>
</svg>
<!-- tab bar -->
<div class="a" style="left:0;top:930.3px;width:1440px;height:43px;background:#f0f0f0"></div>
<div class="a" style="left:42.8px;top:930.3px;width:1028px;height:2.7px;background:#bcbcbc"></div>
<div class="a" style="left:42.8px;top:971.5px;width:1028px;height:1.8px;background:#d6d6d6"></div>
<div class="a" style="left:0;top:930.3px;width:42.8px;height:43px;background:#1651ae"></div>
<svg width="45" height="45" style="left:0;top:930px">
  <rect x="10.3" y="13.1" width="22.4" height="9.9" rx="1" fill="#fff"/>
  <circle cx="23.3" cy="22.7" r="7" fill="#1651ae"/>
  <circle cx="23.3" cy="22.7" r="4.6" fill="none" stroke="#fff" stroke-width="2.1"/>
  <path d="M27.1 26.8 L31.2 30.6" stroke="#fff" stroke-width="2.4" stroke-linecap="round"/>
</svg>
<div class="tab" style="left:42.8px;width:170.5px"><span style="left:39.8px">sliding ring with st...</span></div>
<div class="a" style="left:213.3px;top:933px;width:2.5px;height:38.5px;background:#d8d8d8"></div>
<div class="tab" style="left:215.8px;width:169.5px"><span style="left:37.5px">sliding ring with st...</span></div>
<div class="a" style="left:385.3px;top:933px;width:2.5px;height:38.5px;background:#d8d8d8"></div>
<div class="tab" style="left:387.8px;width:170px"><span style="left:37.3px">sliding ring with st...</span></div>
<div class="a" style="left:557.8px;top:930.3px;width:170.5px;height:41.2px;background:#fff;border-left:1.5px solid #d8d8d8;border-right:1.5px solid #d8d8d8;box-sizing:border-box"></div>
<div class="a" style="left:596.5px;top:943px;font-size:15.5px;color:#111">asr</div>
<div class="tab" style="left:728.3px;width:170px"><span style="left:40px;font-size:13px">Assembly 1</span></div>
<div class="a" style="left:898.3px;top:933px;width:2.5px;height:38.5px;background:#d8d8d8"></div>
<div class="tab" style="left:900.8px;width:170px"><span style="left:38.8px;font-size:13px">CAD Imports</span></div>
<div class="a" style="left:1069.8px;top:933px;width:1.5px;height:38.5px;background:#d8d8d8"></div>
<div class="a" style="left:1438.8px;top:930.6px;width:8px;height:42.4px;background:#f0f0f0;box-shadow:-8px 2px 14px rgba(0,0,0,0.7)"></div>
<svg width="1445" height="60" style="left:0;top:930px">
  <g transform="translate(0,0)" fill="#fff" stroke="#1e1e1e" stroke-width="1.5" stroke-linejoin="round">
   <path d="M57.8 17 L58.5 16.2 H64.5 L67.6 19 V32.3 H61.2 L57.8 29.5 Z"/><path d="M58.3 16.7 L61.2 19.8 V32.3 M61.2 19.8 H67.5" fill="none" stroke-width="0.8" stroke="#777"/>
   <path d="M68 12 L68.7 11.2 H74.3 L77.7 14.5 V32.3 H71.5 L68.3 29.8 Z"/><path d="M68.6 11.6 L71.5 15 V32.3 M71.5 15 H77.6" fill="none" stroke-width="0.8" stroke="#777"/>
  </g>
  <g transform="translate(171.3,0)" fill="#fff" stroke="#1e1e1e" stroke-width="1.5" stroke-linejoin="round">
   <path d="M57.8 17 L58.5 16.2 H64.5 L67.6 19 V32.3 H61.2 L57.8 29.5 Z"/><path d="M58.3 16.7 L61.2 19.8 V32.3 M61.2 19.8 H67.5" fill="none" stroke-width="0.8" stroke="#777"/>
   <path d="M68 12 L68.7 11.2 H74.3 L77.7 14.5 V32.3 H71.5 L68.3 29.8 Z"/><path d="M68.6 11.6 L71.5 15 V32.3 M71.5 15 H77.6" fill="none" stroke-width="0.8" stroke="#777"/>
  </g>
  <g transform="translate(342.6,0)" fill="#fff" stroke="#1e1e1e" stroke-width="1.5" stroke-linejoin="round">
   <path d="M57.8 17 L58.5 16.2 H64.5 L67.6 19 V32.3 H61.2 L57.8 29.5 Z"/><path d="M58.3 16.7 L61.2 19.8 V32.3 M61.2 19.8 H67.5" fill="none" stroke-width="0.8" stroke="#777"/>
   <path d="M68 12 L68.7 11.2 H74.3 L77.7 14.5 V32.3 H71.5 L68.3 29.8 Z"/><path d="M68.6 11.6 L71.5 15 V32.3 M71.5 15 H77.6" fill="none" stroke-width="0.8" stroke="#777"/>
  </g>
  <g transform="translate(0,0)">
   <path d="M571 11.3 H587.6 L592.6 16 V32.4 H576 L571 27.7 Z" fill="#fff"/>
   <path d="M572 12.1 H582 L585.7 16.5 H576 Z" fill="#9c9c9c"/>
   <path d="M576 16.5 H585.7 V26.4 H576 Z" fill="#959595"/>
   <path d="M572 12.1 L576 16.5 V26.4 L572 22.7 Z" fill="#a8a8a8"/>
   <path d="M576 16.5 H592.4 M576 26.5 V32.4 M571.5 11.8 L576 16.5" fill="none" stroke="#bdbdbd" stroke-width="0.8"/>
   <path d="M571 11.3 H587.6 L592.6 16 V32.4 H576 L571 27.7 Z" fill="none" stroke="#1e1e1e" stroke-width="1.5" stroke-linejoin="round"/>
  </g>
  <g transform="translate(171.2,0)">
   <path d="M571 11.3 H587.6 L592.6 16 V32.4 H576 L571 27.7 Z" fill="#fff"/>
   <path d="M572 12.1 H582 L585.7 16.5 H576 Z" fill="#9c9c9c"/>
   <path d="M576 16.5 H585.7 V26.4 H576 Z" fill="#959595"/>
   <path d="M572 12.1 L576 16.5 V26.4 L572 22.7 Z" fill="#a8a8a8"/>
   <path d="M576 16.5 H592.4 M576 26.5 V32.4 M571.5 11.8 L576 16.5" fill="none" stroke="#bdbdbd" stroke-width="0.8"/>
   <path d="M571 11.3 H587.6 L592.6 16 V32.4 H576 L571 27.7 Z" fill="none" stroke="#1e1e1e" stroke-width="1.5" stroke-linejoin="round"/>
  </g>
  <path d="M917.2 16.5 Q916.5 16.5 916.5 17.5 V27.5 Q916.5 28.7 917.7 28.7 H931.5 Q932.6 28.7 932.6 27.5 V19 Q932.6 18 931.5 18 H924.5 L922.6 16.5 Z" fill="none" stroke="#222" stroke-width="1.6" stroke-linejoin="round"/>
  <rect x="529" y="57" width="386" height="8" rx="4" fill="#000"/>
</svg>
</body></html>
